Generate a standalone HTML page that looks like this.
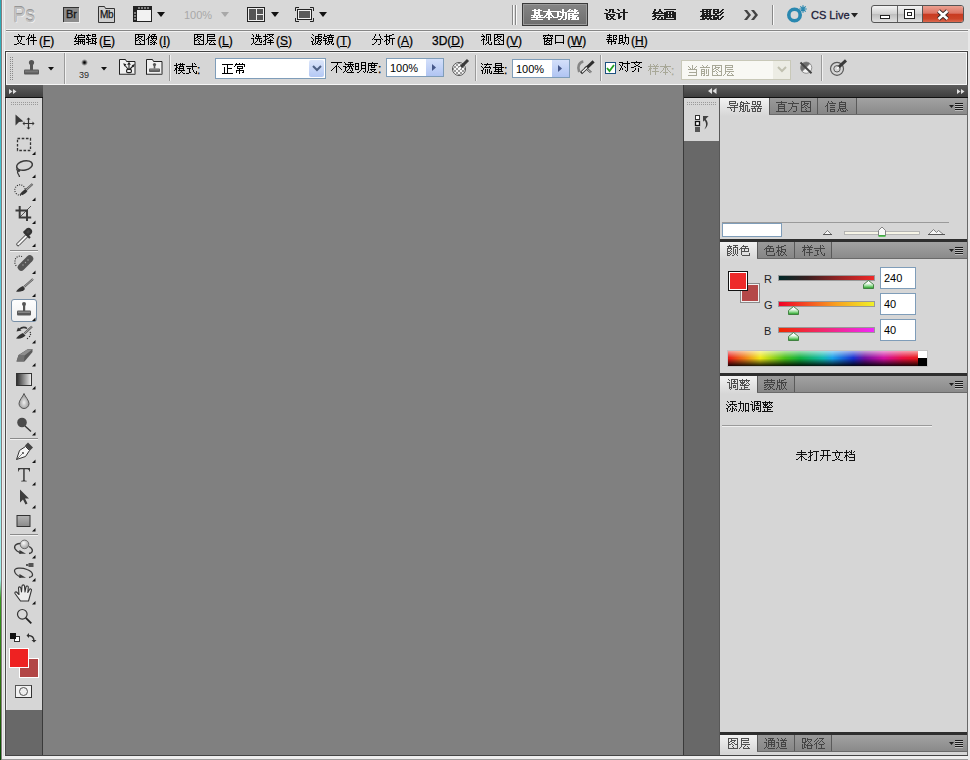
<!DOCTYPE html>
<html><head><meta charset="utf-8">
<style>
*{margin:0;padding:0;box-sizing:border-box}
html,body{width:970px;height:760px;overflow:hidden}
body{position:relative;background:#d9d9d9;font-family:"Liberation Sans",sans-serif;font-size:12px;color:#000}
.a{position:absolute}
.t{position:absolute;white-space:nowrap;line-height:14px}
u{text-decoration:none;border-bottom:1px solid currentColor;line-height:10px;display:inline-block}
</style></head><body>
<!-- desktop strip -->
<div class="a" style="left:0;top:0;width:1px;height:760px;background:linear-gradient(#2aa8b4 0,#40c4d0 150px,#60d0e0 300px,#a0f4f4 500px,#a0f0ec 580px,#3a9a20 598px,#2e8e18 620px,#2a6a0a 700px,#004800 760px)"></div>
<div class="a" style="left:1px;top:0;width:1px;height:760px;background:#8a8a8a"></div>
<div class="a" style="left:1px;top:0;width:1px;height:760px;background:#857c7c"></div><div class="a" style="left:2px;top:0;width:1px;height:760px;background:#eeeaee"></div><div class="a" style="left:3px;top:0;width:1px;height:760px;background:#dadcdc"></div><div class="a" style="left:4px;top:0;width:1px;height:760px;background:#eef0ee"></div>

<!-- app bar -->
<div class="a" style="left:5px;top:0;width:965px;height:29px;background:#d8d8d8"></div>

<!-- menu bar -->
<div class="a" style="left:5px;top:30px;width:965px;height:21px;background:#d8d8d8"></div>
<div class="a" style="left:6px;top:29px;width:964px;height:1px;background:#f2f2f2"></div><div class="a" style="left:6px;top:30px;width:964px;height:1px;background:#868686"></div><div class="a" style="left:6px;top:31px;width:964px;height:1px;background:#f2f2f2"></div>


<!-- APPBAR CONTENT -->
<div class="t" style="left:13px;top:3px;font-size:22px;line-height:24px;color:#c6c6c6;letter-spacing:0px;transform:scaleX(0.85);transform-origin:0 0;-webkit-text-stroke:0.3px #a8a8a8;text-shadow:0 -1px 0 #8e8e8e,1px 1px 0 #f2f2f2">Ps</div>
<div class="a" style="left:63px;top:7px;width:16px;height:15px;background:#8c8c8c;border-top:1px solid #333;border-left:1px solid #333;box-shadow:1px 1px 0 #eee"></div>
<div class="t" style="left:66px;top:8px;font-size:11px;line-height:13px;color:#151515;-webkit-text-stroke:0.3px #151515">Br</div>
<svg class="a" style="left:97px;top:5px" width="21" height="19"><path d="M1.5 17.5V1.5h6l1 2h9v14z" fill="#cfcfcf" stroke="#333" stroke-width="1"/><path d="M8.5 3.5" /></svg>
<div class="t" style="left:100px;top:8px;font-size:10px;line-height:13px;letter-spacing:-0.3px;color:#151515;-webkit-text-stroke:0.25px #151515">Mb</div>
<svg class="a" style="left:133px;top:6px" width="20" height="17"><rect x="0.5" y="0.5" width="18" height="15" fill="#d8d8d8" stroke="#222"/><rect x="1" y="1" width="17" height="3" fill="#222"/><rect x="1" y="1" width="3" height="14" fill="#222"/><path d="M6 1v2M9 1v2M12 1v2M15 1v2M1 7h2M1 10h2M1 13h2" stroke="#ddd"/><rect x="4" y="4" width="14" height="11" fill="#f2f2f2"/></svg>
<svg class="a" style="left:157px;top:12px" width="9" height="6"><path d="M0 0h8l-4 5z" fill="#111"/></svg>
<div class="t" style="left:184px;top:8px;font-size:11px;color:#a8a8a8">100%</div>
<svg class="a" style="left:221px;top:12px" width="9" height="6"><path d="M0 0h8l-4 5z" fill="#a8a8a8"/></svg>
<svg class="a" style="left:247px;top:7px" width="18" height="15"><rect x="0.5" y="0.5" width="17" height="14" fill="#eee" stroke="#222"/><rect x="2" y="2" width="7" height="11" fill="#555"/><rect x="10" y="2" width="6" height="5" fill="#555"/><rect x="10" y="8" width="6" height="5" fill="#555"/></svg>
<svg class="a" style="left:271px;top:12px" width="9" height="6"><path d="M0 0h8l-4 5z" fill="#111"/></svg>
<svg class="a" style="left:295px;top:7px" width="19" height="15"><path d="M0.5 4V0.5H4M15 0.5h3.5V4M18.5 11v3.5H15M4 14.5H0.5V11" stroke="#222" fill="none"/><rect x="2.5" y="2.5" width="14" height="10" fill="#eee" stroke="#222"/><rect x="4" y="4" width="11" height="7" fill="#5a5a5a"/></svg>
<svg class="a" style="left:319px;top:12px" width="9" height="6"><path d="M0 0h8l-4 5z" fill="#111"/></svg>
<div class="a" style="left:512px;top:5px;width:1px;height:20px;background:#888"></div>
<div class="a" style="left:513px;top:5px;width:1px;height:20px;background:#f8f8f8"></div>
<div class="a" style="left:515px;top:5px;width:1px;height:20px;background:#888"></div>
<div class="a" style="left:516px;top:5px;width:1px;height:20px;background:#f8f8f8"></div>
<div class="a" style="left:522px;top:3px;width:66px;height:23px;background:linear-gradient(#858585,#6e6e6e);border:1px solid #3a3a3a;box-shadow:inset 0 0 0 1px #9a9a9a"></div>
<svg class="a" style="left:744px;top:10px" width="15" height="10"><path d="M0 0h3l4 5l-4 5H0l4-5zM7 0h3l4 5l-4 5H7l4-5z" fill="#444"/></svg>
<div class="a" style="left:772px;top:5px;width:1px;height:20px;background:#888"></div>
<div class="a" style="left:773px;top:5px;width:1px;height:20px;background:#f8f8f8"></div>
<svg class="a" style="left:786px;top:4px" width="22" height="20"><circle cx="8.5" cy="11" r="5.7" fill="none" stroke="#2a88b0" stroke-width="3.6"/><path d="M17 1.2v7.6M13.2 5h7.6M14.3 2.3l5.4 5.4M19.7 2.3l-5.4 5.4" stroke="#2a88b0" stroke-width="1.2"/><circle cx="17" cy="5" r="1.3" fill="#2a88b0"/></svg>
<div class="t" style="left:811px;top:8px;font-size:11px;color:#202038;-webkit-text-stroke:0.3px #202038">CS Live</div>
<svg class="a" style="left:851px;top:13px" width="9" height="6"><path d="M0 0h7l-3.5 4.5z" fill="#222"/></svg>
<div class="a" style="left:871px;top:5px;width:93px;height:18px;border:1px solid #555;border-radius:3px;background:linear-gradient(#f4f4f4,#d0d0d0 50%,#bdbdbd 51%,#e0e0e0);overflow:hidden">
 <div class="a" style="left:25px;top:0;width:1px;height:16px;background:#666"></div>
 <div class="a" style="left:50px;top:0;width:41px;height:16px;background:linear-gradient(#eca090,#dc7464 45%,#c83a20 52%,#cc4428 80%,#dc6a50);border-left:1px solid #555"></div>
 <div class="a" style="left:8px;top:9px;width:10px;height:4px;background:#fff;border:1px solid #222"></div>
 <div class="a" style="left:32px;top:3px;width:11px;height:10px;background:#fff;border:1px solid #222;box-shadow:inset 0 0 0 2px #fff,inset 0 0 0 3px #222"></div>
 <svg class="a" style="left:63px;top:2px" width="16" height="13"><path d="M3.5 3l9 8M12.5 3l-9 8" stroke="#3a2a28" stroke-width="4.4"/><path d="M3.5 3l9 8M12.5 3l-9 8" stroke="#fff" stroke-width="2.6"/></svg>
</div>
<!-- MENU -->

<!-- options bar -->
<div class="a" style="left:4px;top:50px;width:965px;height:35px;background:#f4f4f4"></div>
<div class="a" style="left:5px;top:51px;width:963px;height:34px;background:#d6d6d6;border:1px solid #444;border-bottom:none"></div>
<div class="a" style="left:6px;top:52px;width:961px;height:33px;border:1px solid #f6f6f6"></div>


<!-- OPTIONS CONTENT -->
<svg class="a" style="left:10px;top:57px" width="4" height="24"><g fill="#8a8a8a"><rect x="0" y="0" width="1" height="1"/><rect x="2" y="0" width="1" height="1"/><rect x="0" y="2" width="1" height="1"/><rect x="2" y="2" width="1" height="1"/><rect x="0" y="4" width="1" height="1"/><rect x="2" y="4" width="1" height="1"/><rect x="0" y="6" width="1" height="1"/><rect x="2" y="6" width="1" height="1"/><rect x="0" y="8" width="1" height="1"/><rect x="2" y="8" width="1" height="1"/><rect x="0" y="10" width="1" height="1"/><rect x="2" y="10" width="1" height="1"/><rect x="0" y="12" width="1" height="1"/><rect x="2" y="12" width="1" height="1"/><rect x="0" y="14" width="1" height="1"/><rect x="2" y="14" width="1" height="1"/><rect x="0" y="16" width="1" height="1"/><rect x="2" y="16" width="1" height="1"/><rect x="0" y="18" width="1" height="1"/><rect x="2" y="18" width="1" height="1"/><rect x="0" y="20" width="1" height="1"/><rect x="2" y="20" width="1" height="1"/><rect x="0" y="22" width="1" height="1"/><rect x="2" y="22" width="1" height="1"/></g></svg>
<svg class="a" style="left:23px;top:59px" width="17" height="17"><circle cx="8.5" cy="3.5" r="2.6" fill="#555"/><rect x="7" y="4" width="3" height="7" fill="#555"/><rect x="1" y="10.5" width="15" height="5" rx="1" fill="#5a5a5a"/><rect x="2" y="11.5" width="13" height="2" fill="#777"/></svg>
<svg class="a" style="left:48px;top:67px" width="7" height="4"><path d="M0 0h6l-3 3.5z" fill="#111"/></svg>
<div class="a" style="left:64px;top:53px;width:1px;height:31px;background:#9a9a9a"></div>
<div class="a" style="left:65px;top:53px;width:1px;height:31px;background:#f0f0f0"></div>
<div class="a" style="left:81px;top:59px;width:7px;height:7px;border-radius:50%;background:radial-gradient(circle,#000 0,#222 20%,#999 50%,rgba(214,214,214,0) 70%)"></div>
<div class="t" style="left:79px;top:70px;font-size:9px;line-height:11px;color:#2a2a2a">39</div>
<svg class="a" style="left:101px;top:67px" width="7" height="4"><path d="M0 0h6l-3 3.5z" fill="#111"/></svg>
<svg class="a" style="left:118px;top:58px" width="19" height="18"><path d="M1.5 16.5V1.5h6l1 2h8.5v13z" fill="#f0f0f0" stroke="#222"/><path d="M2 16h15" stroke="#888"/><rect x="8.6" y="11.3" width="4.8" height="3.4" rx="1.2" fill="none" stroke="#222" stroke-width="1.2"/><path d="M10 11L7 7.5M11 11V6.5M12 11l3-3" stroke="#222" stroke-width="1.1"/><path d="M5.2 5.2l3.2 1-2 2.3zM11 3.8l1.9 3h-3.8zM16.8 6l-1 3.2-2.2-2z" fill="#222"/></svg>
<svg class="a" style="left:145px;top:58px" width="19" height="18"><path d="M1.5 16.5V1.5h6l1 2h8.5v13z" fill="#f0f0f0" stroke="#222"/><path d="M2 16h15" stroke="#888"/><circle cx="9.5" cy="6.5" r="1.6" fill="#555"/><rect x="8.7" y="7" width="1.6" height="3.5" fill="#555"/><rect x="4" y="10.5" width="11" height="3.5" rx="0.8" fill="#5a5a5a"/><rect x="5" y="11.3" width="9" height="1" fill="#8a8a8a"/></svg>
<div class="a" style="left:169px;top:55px;width:1px;height:26px;background:#9a9a9a"></div>
<div class="a" style="left:170px;top:55px;width:1px;height:26px;background:#f0f0f0"></div>
<div class="a" style="left:215px;top:58px;width:111px;height:21px;background:#fff;border:1px solid #7f9db9"></div>
<div class="a" style="left:309px;top:60px;width:15px;height:17px;background:linear-gradient(#dce6fa,#b4c8f4);border-radius:2px"></div>
<svg class="a" style="left:312px;top:65px" width="10" height="7"><path d="M1 1l4 4 4-4" stroke="#4d6185" stroke-width="2" fill="none"/></svg>
<div class="a" style="left:386px;top:58px;width:58px;height:19px;background:#fff;border:1px solid #7f9db9"></div>
<div class="a" style="left:426px;top:59px;width:17px;height:17px;background:linear-gradient(#d4e0fa,#b0c4f2)"></div>
<svg class="a" style="left:431px;top:64px" width="6" height="8"><path d="M1 0l4 3.5-4 3.5z" fill="#46588a"/></svg>
<div class="t" style="left:390px;top:61px;font-size:11px">100%</div>
<svg class="a" style="left:450px;top:58px" width="20" height="20"><defs><pattern id="ck" width="4" height="4" patternUnits="userSpaceOnUse"><rect width="4" height="4" fill="#f4f4f4"/><rect width="2" height="2" fill="#9a9a9a"/><rect x="2" y="2" width="2" height="2" fill="#9a9a9a"/></pattern></defs><circle cx="9" cy="11" r="6.5" fill="url(#ck)" stroke="#555" stroke-width="1"/><path d="M10.5 9.5l7.5-7.5" stroke="#3a3a3a" stroke-width="3"/><path d="M9.5 10.5l1.5-1.5" stroke="#fff" stroke-width="1.8"/></svg>
<div class="a" style="left:475px;top:55px;width:1px;height:26px;background:#9a9a9a"></div>
<div class="a" style="left:476px;top:55px;width:1px;height:26px;background:#f0f0f0"></div>
<div class="a" style="left:512px;top:59px;width:58px;height:19px;background:#fff;border:1px solid #7f9db9"></div>
<div class="a" style="left:552px;top:60px;width:17px;height:17px;background:linear-gradient(#d4e0fa,#b0c4f2)"></div>
<svg class="a" style="left:557px;top:65px" width="6" height="8"><path d="M1 0l4 3.5-4 3.5z" fill="#46588a"/></svg>
<div class="t" style="left:516px;top:62px;font-size:11px">100%</div>
<svg class="a" style="left:576px;top:59px" width="19" height="19"><path d="M7.3 2.6C3 3.5 1 8 3.2 13" stroke="#777" stroke-width="2.6" fill="none" opacity="0.85"/><path d="M9 8l6 5.5" stroke="#333" stroke-width="2.2"/><path d="M9 8l6 5.5" stroke="#f4f4f4" stroke-width="0.9"/><path d="M5 14.2L17.6 2.4" stroke="#2e2e2e" stroke-width="3"/><path d="M6 13.2L11 8.5" stroke="#f6f6f6" stroke-width="1.4"/></svg>
<div class="a" style="left:600px;top:55px;width:1px;height:26px;background:#9a9a9a"></div>
<div class="a" style="left:601px;top:55px;width:1px;height:26px;background:#f0f0f0"></div>
<div class="a" style="left:605px;top:62px;width:11px;height:12px;background:#fff;border:1px solid #1c5180"></div>
<svg class="a" style="left:606px;top:64px" width="9" height="9"><path d="M1 4l2.5 3 4.5-6" stroke="#21a121" stroke-width="1.8" fill="none"/></svg>
<div class="a" style="left:681px;top:60px;width:110px;height:20px;background:#f8f8f4;border:1px solid #c8c8b8"></div>
<div class="a" style="left:773px;top:61px;width:17px;height:18px;background:#ececE4"></div>
<svg class="a" style="left:777px;top:66px" width="10" height="7"><path d="M1 1l4 4 4-4" stroke="#c0c0b0" stroke-width="2" fill="none"/></svg>
<svg class="a" style="left:798px;top:60px" width="17" height="17"><defs><linearGradient id="ig" x1="0" y1="0" x2="1" y2="1"><stop offset="0.45" stop-color="#6e6e6e"/><stop offset="0.55" stop-color="#f2f2f2"/></linearGradient></defs><circle cx="8.2" cy="7.7" r="5.6" fill="url(#ig)" stroke="#7a7a7a" stroke-width="0.8"/><path d="M2.5 2.5L13.5 13.3" stroke="#444" stroke-width="2"/></svg>
<div class="a" style="left:821px;top:55px;width:1px;height:26px;background:#9a9a9a"></div>
<div class="a" style="left:822px;top:55px;width:1px;height:26px;background:#f0f0f0"></div>
<svg class="a" style="left:829px;top:58px" width="20" height="20"><circle cx="8" cy="10.8" r="6.5" fill="none" stroke="#5a5a5a" stroke-width="1.2"/><circle cx="8" cy="10.8" r="3.2" fill="none" stroke="#5a5a5a" stroke-width="1"/><path d="M9.5 9.3L17 2.3" stroke="#3a3a3a" stroke-width="3"/><path d="M8 10.8l1.8-1.8" stroke="#fff" stroke-width="1.3"/></svg>

<!-- toolbox -->
<div class="a" style="left:5px;top:85px;width:38px;height:671px;background:#686868;border-left:1px solid #4a4a4a;border-right:1px solid #3a3a3a"></div>
<div class="a" style="left:5px;top:85px;width:38px;height:12px;background:linear-gradient(#5c5c5c,#3e3e3e);border-left:1px solid #4a4a4a"></div>
<div class="a" style="left:5px;top:97px;width:38px;height:1px;background:#111"></div>
<div class="a" style="left:6px;top:98px;width:36px;height:612px;background:#d6d6d6;border-left:1px solid #ececec"></div>


<!-- TOOLS -->
<div class="a" style="left:11px;top:299px;width:26px;height:23px;border:1px solid #7890a8;border-radius:3px;background:linear-gradient(#fdfdfd,#f0f0f0)"></div>
<svg class="a" style="left:0;top:0" width="45" height="710">
<defs>
<linearGradient id="gg" x1="0" x2="1"><stop offset="0" stop-color="#2a2a2a"/><stop offset="1" stop-color="#f2f2f2"/></linearGradient>
<linearGradient id="rg" x1="0" x2="0" y1="0" y2="1"><stop offset="0" stop-color="#b4b4b4"/><stop offset="1" stop-color="#8a8a8a"/></linearGradient>
<radialGradient id="ball" cx="0.4" cy="0.35" r="0.7"><stop offset="0" stop-color="#fafafa"/><stop offset="1" stop-color="#999"/></radialGradient>
<radialGradient id="drop" cx="0.5" cy="0.6" r="0.6"><stop offset="0" stop-color="#eee"/><stop offset="1" stop-color="#888"/></radialGradient>
</defs>
<g fill="#9a9a9a"><rect x="11" y="102" width="1" height="1"/><rect x="11" y="104" width="1" height="1"/><rect x="13" y="102" width="1" height="1"/><rect x="13" y="104" width="1" height="1"/><rect x="15" y="102" width="1" height="1"/><rect x="15" y="104" width="1" height="1"/><rect x="17" y="102" width="1" height="1"/><rect x="17" y="104" width="1" height="1"/><rect x="19" y="102" width="1" height="1"/><rect x="19" y="104" width="1" height="1"/><rect x="21" y="102" width="1" height="1"/><rect x="21" y="104" width="1" height="1"/><rect x="23" y="102" width="1" height="1"/><rect x="23" y="104" width="1" height="1"/><rect x="25" y="102" width="1" height="1"/><rect x="25" y="104" width="1" height="1"/><rect x="27" y="102" width="1" height="1"/><rect x="27" y="104" width="1" height="1"/><rect x="29" y="102" width="1" height="1"/><rect x="29" y="104" width="1" height="1"/><rect x="31" y="102" width="1" height="1"/><rect x="31" y="104" width="1" height="1"/><rect x="33" y="102" width="1" height="1"/><rect x="33" y="104" width="1" height="1"/><rect x="35" y="102" width="1" height="1"/><rect x="35" y="104" width="1" height="1"/><rect x="37" y="102" width="1" height="1"/><rect x="37" y="104" width="1" height="1"/></g>
<path d="M32 155.0h3.5v-3.5z" fill="#111"/><path d="M32 178.0h3.5v-3.5z" fill="#111"/><path d="M32 201.0h3.5v-3.5z" fill="#111"/><path d="M32 224.0h3.5v-3.5z" fill="#111"/><path d="M32 247.0h3.5v-3.5z" fill="#111"/><path d="M32 274.0h3.5v-3.5z" fill="#111"/><path d="M32 297.0h3.5v-3.5z" fill="#111"/><path d="M32 321.0h3.5v-3.5z" fill="#111"/><path d="M32 343.5h3.5v-3.5z" fill="#111"/><path d="M32 366.5h3.5v-3.5z" fill="#111"/><path d="M32 389.5h3.5v-3.5z" fill="#111"/><path d="M32 412.5h3.5v-3.5z" fill="#111"/><path d="M32 435.5h3.5v-3.5z" fill="#111"/><path d="M32 463.0h3.5v-3.5z" fill="#111"/><path d="M32 485.5h3.5v-3.5z" fill="#111"/><path d="M32 508.5h3.5v-3.5z" fill="#111"/><path d="M32 531.5h3.5v-3.5z" fill="#111"/><path d="M32 558.5h3.5v-3.5z" fill="#111"/><path d="M32 581.5h3.5v-3.5z" fill="#111"/><path d="M32 604.5h3.5v-3.5z" fill="#111"/>
<rect x="10" y="250" width="28" height="1" fill="#8a8a8a"/><rect x="10" y="251" width="28" height="1" fill="#f2f2f2"/>
<rect x="10" y="438" width="28" height="1" fill="#8a8a8a"/><rect x="10" y="439" width="28" height="1" fill="#f2f2f2"/>
<rect x="10" y="534" width="28" height="1" fill="#8a8a8a"/><rect x="10" y="535" width="28" height="1" fill="#f2f2f2"/>
<!-- move -->
<path d="M15.5 114.5L23.5 121.5L19 122L15.5 125.5z" fill="#3a3a3a"/>
<path d="M24 123.5h9M28.5 119v9" stroke="#333" stroke-width="1.2"/>
<path d="M28.5 117.5l-2 2h4zM28.5 129.5l-2-2h4zM22.5 123.5l2-2v4zM34.5 123.5l-2-2v4z" fill="#333"/>
<!-- marquee -->
<rect x="17.5" y="138.5" width="13" height="12" fill="none" stroke="#333" stroke-width="1.3" stroke-dasharray="2.6 1.6"/>
<!-- lasso -->
<ellipse cx="24.5" cy="165.5" rx="8" ry="4.6" transform="rotate(-12 24.5 165.5)" fill="none" stroke="#3a3a3a" stroke-width="1.5"/>
<path d="M17.5 168c-2 2 1 4 2 3s-2-1-2 1 2 3 2 5" fill="none" stroke="#3a3a3a" stroke-width="1.3"/>
<!-- quick select -->
<circle cx="20" cy="190" r="5.2" fill="none" stroke="#222" stroke-width="1.1" stroke-dasharray="1 1.3"/>
<path d="M19.5 195c3 0 6-1 8-4l-2-2c-3 2-5 4-6 6z" fill="#333"/>
<path d="M26.5 189.5l6-5.5" stroke="#555" stroke-width="2.2"/><path d="M26.5 189.5l6-5.5" stroke="#ccc" stroke-width="0.7"/>
<!-- crop -->
<path d="M19.7 206v11.5h11.5M15.5 210.5h11.5v10.5" fill="none" stroke="#3a3a3a" stroke-width="2"/>
<path d="M20 217L31 206" stroke="#333" stroke-width="0.8"/>
<!-- eyedropper -->
<path d="M17 243.5l9-9 2 2-9 9c-1 1-3 0-2-2z" fill="#f4f4f4" stroke="#333" stroke-width="1"/>
<path d="M24 232l6 6M27 229.5a2.5 2.5 0 0 1 3.5 3.5l-2.5 2.5-3.5-3.5z" stroke="#333" stroke-width="2.2" fill="#444"/>
<!-- healing -->
<path d="M22 256.5a5 5 0 0 0-7 5a5 5 0 0 0 2 5" fill="none" stroke="#222" stroke-width="1.1" stroke-dasharray="1 1.3"/>
<rect x="16" y="259.5" width="19" height="7" rx="3.5" transform="rotate(-45 25.5 263)" fill="#555"/>
<g fill="#aaa"><circle cx="23" cy="265" r="0.7"/><circle cx="25.5" cy="262.5" r="0.7"/><circle cx="28" cy="260" r="0.7"/></g>
<!-- brush -->
<path d="M16 291.5c4 0.5 7 0 9-2.5l-2-3c-3 1-5 3-7 5.5z" fill="#333"/>
<path d="M24 287l9-8" stroke="#555" stroke-width="2.2"/><path d="M24 287l9-8" stroke="#ccc" stroke-width="0.7"/>
<!-- stamp -->
<circle cx="24" cy="304" r="2" fill="#555"/>
<rect x="23" y="305" width="2.2" height="6" fill="#555"/>
<rect x="17" y="310.5" width="14" height="5" rx="1" fill="#5a5a5a"/><rect x="18" y="311.5" width="12" height="1.5" fill="#888"/>
<!-- history brush -->
<path d="M27 328.5c-2-1.5-5-1.5-8 1" fill="none" stroke="#333" stroke-width="1.5"/><path d="M16.5 331.5l1.5-4 3.5 3z" fill="#333"/>
<path d="M16 338.5c4 0.5 7.5-0.5 9.5-3l-2.5-2.5c-3 1-5 3-7 5.5z" fill="#333"/>
<path d="M24.5 333.5l7.5-7" stroke="#555" stroke-width="2.2"/><path d="M24.5 333.5l7.5-7" stroke="#ccc" stroke-width="0.7"/>
<g fill="#333"><circle cx="30.3" cy="332.5" r="0.7"/><circle cx="30.5" cy="334.5" r="0.7"/><circle cx="29.5" cy="336.5" r="0.7"/><circle cx="27.5" cy="338.5" r="0.7"/></g>
<!-- eraser -->
<path d="M16.5 361.5L18.5 355L28 349h4.5v3l-8 9.5z" fill="#5a5a5a"/>
<path d="M18.5 355.5L27.5 349.2h5L24.5 355.5z" fill="#8e8e8e"/>
<path d="M16.5 361.5L18.5 355.5h6l-0.5 6z" fill="#727272"/>
<!-- gradient -->
<rect x="16.5" y="373.5" width="15" height="12" fill="url(#gg)" stroke="#333"/>
<!-- blur -->
<path d="M24 393.5c-1 3-5 7-5 10a5 5 0 0 0 10 0c0-3-4-7-5-10z" fill="url(#drop)" stroke="#555" stroke-width="1"/>
<!-- dodge -->
<circle cx="22" cy="422.5" r="4.8" fill="#4a4a4a"/>
<path d="M25 426l6 5.5" stroke="#333" stroke-width="1.3"/>
<!-- pen -->
<path d="M16.5 459.5l3-9 6-4 4 4-4 6z" fill="#f6f6f6" stroke="#333" stroke-width="1"/>
<path d="M25 445.5l3-3 5 5-3 3z" fill="#444"/><circle cx="23" cy="453" r="0.9" fill="#333"/><path d="M16.5 459.5l6-6" stroke="#333" stroke-width="0.6"/>
<!-- type -->
<path d="M18 468h12v3.5h-0.8c0-2-1-2.3-3-2.3h-1.5v10.5c0 0.8 0.5 1 2 1v0.8h-5.5v-0.8c1.5 0 2-0.2 2-1v-10.5h-1.5c-2 0-3 0.3-3 2.3h-0.7z" fill="#3a3a3a"/>
<!-- path select -->
<path d="M20 489.5v13l3-3 2.5 5 2-1-2.5-5h4z" fill="#3c3c3c"/>
<!-- rect -->
<rect x="17" y="515.5" width="13" height="11" fill="url(#rg)" stroke="#333" stroke-width="1"/>
<!-- 3d rotate -->
<path d="M20 543.5C14 544 13 548 17 551L21 553.2M29 553.5C33 553 34 549 29 546.5" fill="none" stroke="#3a3a3a" stroke-width="1.3"/>
<path d="M19.5 550L26 553.8H19z" fill="#3a3a3a"/>
<circle cx="24.5" cy="544.4" r="4.3" fill="url(#ball)" stroke="#555" stroke-width="0.8"/>
<!-- 3d orbit -->
<path d="M29 577.5C34 577 34 572 27 569.5C22 567.5 14 567.5 14.5 571C15 574 18 576 21 577.3" fill="none" stroke="#3a3a3a" stroke-width="1.3"/>
<path d="M19.5 574L26 577.8H19z" fill="#3a3a3a"/>
<rect x="28.5" y="563" width="5" height="4" fill="#555"/><rect x="26" y="564" width="2.5" height="2" fill="#555"/>
<!-- hand -->
<path d="M20.5 601L15 593.5C14.5 592.5 15.5 591.5 16.5 592L19 594.5L18.5 588C18.5 586.5 20.5 586.5 20.8 588L21.5 592L22 586C22.2 584.5 24.3 584.5 24.5 586L25 592L26 587C26.3 585.5 28.3 585.8 28.3 587.2L27.8 592.5L29.5 589.5C30 588.5 31.8 588.8 31.5 590.2L28.5 601z" fill="#ececec" stroke="#333" stroke-width="1.1" stroke-linejoin="round"/>
<!-- zoom -->
<circle cx="22.3" cy="614.3" r="4.8" fill="#d8d8d8" stroke="#333" stroke-width="1.2"/>
<path d="M25.8 617.8l5.5 5.5" stroke="#222" stroke-width="1.8"/>
<!-- default colors -->
<rect x="14.5" y="636.5" width="5" height="5" fill="#fff" stroke="#333" stroke-width="1"/>
<rect x="10" y="633" width="6" height="6" fill="#111"/>
<path d="M28 635.5c4 0 6 2 6 5.5" fill="none" stroke="#333" stroke-width="1.3"/>
<path d="M26.5 635.5l2.5-2.5v5z M34 642.5l-2.5-2.5h5z" fill="#333"/>
<!-- fg/bg -->
<rect x="19" y="658" width="20" height="20" fill="#fff"/>
<rect x="20" y="659" width="18" height="18" fill="#b24646"/>
<rect x="9" y="648" width="20" height="20" fill="#fff"/>
<rect x="10" y="649" width="18" height="18" fill="#ee2222"/>
<!-- quick mask -->
<rect x="15.5" y="685.5" width="16" height="12" fill="#f2f2f2" stroke="#555" stroke-width="1"/>
<path d="M15.5 697.5h16v-12" fill="none" stroke="#333" stroke-width="1"/>
<circle cx="23.5" cy="691.5" r="4" fill="#eee" stroke="#555" stroke-width="1"/>
</svg>

<!-- canvas -->
<div class="a" style="left:43px;top:85px;width:640px;height:670px;background:#808080"></div>

<!-- right dock -->
<div class="a" style="left:683px;top:85px;width:285px;height:670px;background:#686868;border-left:1px solid #3a3a3a"></div>
<div class="a" style="left:684px;top:85px;width:284px;height:12px;background:linear-gradient(#5c5c5c,#3e3e3e)"></div>
<div class="a" style="left:684px;top:97px;width:284px;height:1px;background:#111"></div>
<div class="a" style="left:684px;top:98px;width:35px;height:43px;background:#d6d6d6"></div>
<div class="a" style="left:719px;top:98px;width:1px;height:657px;background:#585858"></div><div class="a" style="left:720px;top:98px;width:1px;height:657px;background:#e2e2e2"></div><div class="a" style="left:966px;top:98px;width:1px;height:657px;background:#e0e0e0"></div>

<!-- panels -->
<div class="a" style="left:720px;top:98px;width:247px;height:141px;background:#d6d6d6"></div>
<div class="a" style="left:720px;top:239px;width:247px;height:3px;background:#2e2e2e"></div>
<div class="a" style="left:720px;top:242px;width:247px;height:131px;background:#d6d6d6"></div>
<div class="a" style="left:720px;top:373px;width:247px;height:3px;background:#2e2e2e"></div>
<div class="a" style="left:720px;top:376px;width:247px;height:356px;background:#d6d6d6"></div>
<div class="a" style="left:720px;top:732px;width:247px;height:3px;background:#2e2e2e"></div>
<div class="a" style="left:720px;top:735px;width:247px;height:20px;background:#d6d6d6"></div>


<!-- PANEL CONTENT -->
<svg class="a" style="left:9px;top:89px" width="8" height="6"><path d="M0 0l3.5 2.5L0 5zM4 0l3.5 2.5L4 5z" fill="#e0e0e0"/></svg>
<svg class="a" style="left:708px;top:88px" width="9" height="6"><path d="M4 0L0 3l4 3zM8.5 0L4.5 3l4 3z" fill="#e0e0e0"/></svg>
<svg class="a" style="left:957px;top:89px" width="8" height="6"><path d="M0 0l3.5 2.5L0 5zM4 0l3.5 2.5L4 5z" fill="#e0e0e0"/></svg>
<svg class="a" style="left:687px;top:102px" width="30" height="3"><g fill="#9a9a9a"><rect x="0" y="0" width="1" height="1"/><rect x="0" y="2" width="1" height="1"/><rect x="2" y="0" width="1" height="1"/><rect x="2" y="2" width="1" height="1"/><rect x="4" y="0" width="1" height="1"/><rect x="4" y="2" width="1" height="1"/><rect x="6" y="0" width="1" height="1"/><rect x="6" y="2" width="1" height="1"/><rect x="8" y="0" width="1" height="1"/><rect x="8" y="2" width="1" height="1"/><rect x="10" y="0" width="1" height="1"/><rect x="10" y="2" width="1" height="1"/><rect x="12" y="0" width="1" height="1"/><rect x="12" y="2" width="1" height="1"/><rect x="14" y="0" width="1" height="1"/><rect x="14" y="2" width="1" height="1"/><rect x="16" y="0" width="1" height="1"/><rect x="16" y="2" width="1" height="1"/><rect x="18" y="0" width="1" height="1"/><rect x="18" y="2" width="1" height="1"/><rect x="20" y="0" width="1" height="1"/><rect x="20" y="2" width="1" height="1"/><rect x="22" y="0" width="1" height="1"/><rect x="22" y="2" width="1" height="1"/><rect x="24" y="0" width="1" height="1"/><rect x="24" y="2" width="1" height="1"/><rect x="26" y="0" width="1" height="1"/><rect x="26" y="2" width="1" height="1"/><rect x="28" y="0" width="1" height="1"/><rect x="28" y="2" width="1" height="1"/></g></svg>
<svg class="a" style="left:694px;top:114px" width="17" height="19"><rect x="1.5" y="1.5" width="4" height="4" fill="#fff" stroke="#333"/><rect x="1.5" y="7.5" width="4" height="4" fill="#fff" stroke="#111" stroke-width="1.3"/><rect x="1" y="13" width="5" height="5" fill="#555"/><path d="M9 2.1h5.7L9 7.8z" fill="#444"/><path d="M11 4.5C14.5 7.5 15 12 10.2 15.6C13 12 12.5 8 10 6z" fill="#3a3a3a"/></svg>
<div class="a" style="left:720px;top:98px;width:247px;height:17px;background:linear-gradient(#a2a2a2,#8a8a8a);border-bottom:1px solid #6a6a6a"></div>
<div class="a" style="left:720px;top:98px;width:49px;height:18px;background:linear-gradient(#f2f2f2,#d6d6d6)"></div>
<div class="a" style="left:769px;top:98px;width:49px;height:16px;background:linear-gradient(#9a9a9a,#868686);border-right:1px solid #5a5a5a;border-left:1px solid #5a5a5a"></div>
<div class="a" style="left:818px;top:98px;width:39px;height:16px;background:linear-gradient(#9a9a9a,#868686);border-right:1px solid #5a5a5a;border-left:none"></div>
<svg class="a" style="left:949px;top:98px" width="15" height="13"><path d="M0 7h5l-2.5 3z" fill="#222"/><g fill="#1a1a1a"><rect x="6" y="5" width="8" height="1"/><rect x="6" y="7" width="8" height="1"/><rect x="6" y="9" width="8" height="1"/><rect x="6" y="11" width="8" height="1"/></g><g fill="#bdbdbd"><rect x="6" y="6" width="8" height="1"/><rect x="6" y="8" width="8" height="1"/><rect x="6" y="10" width="8" height="1"/><rect x="6" y="12" width="8" height="1"/></g></svg>

<div class="a" style="left:722px;top:222px;width:227px;height:1px;background:#9a9a9a"></div>
<div class="a" style="left:722px;top:223px;width:60px;height:14px;background:#fff;border:1px solid #7f9db9"></div>
<svg class="a" style="left:822px;top:226px" width="128" height="12"><path d="M1.5 8.5l4-4 4 4z" fill="#f4f4f4" stroke="#666" stroke-width="0.8"/><path d="M1 8.5h9" stroke="#555"/><rect x="22.5" y="5.5" width="75" height="3" fill="#f6f4e6" stroke="#aaa" stroke-width="0.8"/><path d="M56.5 9.5v-5l3.5-3.5 3.5 3.5v5z" fill="#f8f8f8" stroke="#777" stroke-width="0.9"/><path d="M56.5 10h7" stroke="#2cb82c" stroke-width="1.4"/><path d="M106.5 8.5l5-5 3 3 2-2 5 4z" fill="#f4f4f4" stroke="#666" stroke-width="0.8"/><path d="M106 8.5h17" stroke="#555"/></svg>
<div class="a" style="left:720px;top:242px;width:247px;height:17px;background:linear-gradient(#a2a2a2,#8a8a8a);border-bottom:1px solid #6a6a6a"></div>
<div class="a" style="left:720px;top:242px;width:37px;height:18px;background:linear-gradient(#f2f2f2,#d6d6d6)"></div>
<div class="a" style="left:757px;top:242px;width:38px;height:16px;background:linear-gradient(#9a9a9a,#868686);border-right:1px solid #5a5a5a;border-left:1px solid #5a5a5a"></div>
<div class="a" style="left:795px;top:242px;width:37px;height:16px;background:linear-gradient(#9a9a9a,#868686);border-right:1px solid #5a5a5a;border-left:none"></div>
<svg class="a" style="left:949px;top:242px" width="15" height="13"><path d="M0 7h5l-2.5 3z" fill="#222"/><g fill="#1a1a1a"><rect x="6" y="5" width="8" height="1"/><rect x="6" y="7" width="8" height="1"/><rect x="6" y="9" width="8" height="1"/><rect x="6" y="11" width="8" height="1"/></g><g fill="#bdbdbd"><rect x="6" y="6" width="8" height="1"/><rect x="6" y="8" width="8" height="1"/><rect x="6" y="10" width="8" height="1"/><rect x="6" y="12" width="8" height="1"/></g></svg>

<div class="a" style="left:728px;top:271px;width:20px;height:20px;background:#ee2a2a;border:1px solid #111;box-shadow:inset 0 0 0 1px #fff"></div>
<div class="a" style="left:740px;top:283px;width:20px;height:20px;background:#b44848;border:1px solid #8a8a8a;box-shadow:inset 0 0 0 1px #f0f0f0"></div>
<div class="a" style="left:728px;top:271px;width:20px;height:20px;background:#ee2a2a;border:1px solid #111;box-shadow:inset 0 0 0 1px #fff"></div>
<div class="t" style="left:764px;top:272px;font-size:11px;color:#222">R</div>
<div class="t" style="left:764px;top:298px;font-size:11px;color:#222">G</div>
<div class="t" style="left:764px;top:324px;font-size:11px;color:#222">B</div>
<div class="a" style="left:778px;top:275px;width:97px;height:6px;background:linear-gradient(90deg,#002828,#3a2020 30%,#9a2424 65%,#f02828);border:1px solid #999"></div>
<div class="a" style="left:778px;top:301px;width:97px;height:6px;background:linear-gradient(90deg,#f00028,#f8a020 60%,#f0f028);border:1px solid #999"></div>
<div class="a" style="left:778px;top:327px;width:97px;height:6px;background:linear-gradient(90deg,#f02800,#f02878 50%,#f028f8);border:1px solid #999"></div>
<svg class="a" style="left:863px;top:280px" width="11" height="9"><defs><linearGradient id="tg1" x1="0" x2="0" y1="0" y2="1"><stop offset="0.35" stop-color="#fafafa"/><stop offset="0.65" stop-color="#9be09b"/><stop offset="1" stop-color="#1a9a1a"/></linearGradient></defs><path d="M0.5 8.5V4.5l5-4 5 4v4z" fill="url(#tg1)" stroke="#3a7a3a" stroke-width="0.9"/></svg>
<svg class="a" style="left:788px;top:306px" width="11" height="9"><defs><linearGradient id="tg2" x1="0" x2="0" y1="0" y2="1"><stop offset="0.35" stop-color="#fafafa"/><stop offset="0.65" stop-color="#9be09b"/><stop offset="1" stop-color="#1a9a1a"/></linearGradient></defs><path d="M0.5 8.5V4.5l5-4 5 4v4z" fill="url(#tg2)" stroke="#3a7a3a" stroke-width="0.9"/></svg>
<svg class="a" style="left:788px;top:332px" width="11" height="9"><defs><linearGradient id="tg3" x1="0" x2="0" y1="0" y2="1"><stop offset="0.35" stop-color="#fafafa"/><stop offset="0.65" stop-color="#9be09b"/><stop offset="1" stop-color="#1a9a1a"/></linearGradient></defs><path d="M0.5 8.5V4.5l5-4 5 4v4z" fill="url(#tg3)" stroke="#3a7a3a" stroke-width="0.9"/></svg>
<div class="a" style="left:880px;top:267px;width:36px;height:22px;background:#fff;border:1px solid #7f9db9"></div>
<div class="a" style="left:880px;top:293px;width:36px;height:22px;background:#fff;border:1px solid #7f9db9"></div>
<div class="a" style="left:880px;top:319px;width:36px;height:22px;background:#fff;border:1px solid #7f9db9"></div>
<div class="t" style="left:884px;top:271px;font-size:11px">240</div>
<div class="t" style="left:884px;top:297px;font-size:11px">40</div>
<div class="t" style="left:884px;top:323px;font-size:11px">40</div>
<div class="a" style="left:727px;top:350px;width:201px;height:17px;background:#c4c4c4"></div>
<div class="a" style="left:728px;top:351px;width:190px;height:15px;background:linear-gradient(90deg,#e81818 0%,#f08018 9%,#f0e818 17%,#48c018 30%,#10b040 38%,#10b8b0 50%,#18a0e8 55%,#1830d0 66%,#7010a0 72%,#d010a0 82%,#e81040 92%,#e81818 100%)"></div>
<div class="a" style="left:728px;top:351px;width:190px;height:15px;background:linear-gradient(rgba(255,255,255,0.6),rgba(255,255,255,0) 45%,rgba(0,0,0,0) 50%,rgba(0,0,0,0.9))"></div>
<div class="a" style="left:918px;top:351px;width:9px;height:7px;background:#fff"></div>
<div class="a" style="left:918px;top:358px;width:9px;height:8px;background:#000"></div>
<div class="a" style="left:720px;top:376px;width:247px;height:17px;background:linear-gradient(#a2a2a2,#8a8a8a);border-bottom:1px solid #6a6a6a"></div>
<div class="a" style="left:720px;top:376px;width:37px;height:18px;background:linear-gradient(#f2f2f2,#d6d6d6)"></div>
<div class="a" style="left:757px;top:376px;width:38px;height:16px;background:linear-gradient(#9a9a9a,#868686);border-right:1px solid #5a5a5a;border-left:1px solid #5a5a5a"></div>
<svg class="a" style="left:949px;top:376px" width="15" height="13"><path d="M0 7h5l-2.5 3z" fill="#222"/><g fill="#1a1a1a"><rect x="6" y="5" width="8" height="1"/><rect x="6" y="7" width="8" height="1"/><rect x="6" y="9" width="8" height="1"/><rect x="6" y="11" width="8" height="1"/></g><g fill="#bdbdbd"><rect x="6" y="6" width="8" height="1"/><rect x="6" y="8" width="8" height="1"/><rect x="6" y="10" width="8" height="1"/><rect x="6" y="12" width="8" height="1"/></g></svg>

<div class="a" style="left:722px;top:425px;width:210px;height:1px;background:#9a9a9a"></div>
<div class="a" style="left:722px;top:426px;width:210px;height:1px;background:#f0f0f0"></div>
<div class="a" style="left:720px;top:735px;width:247px;height:17px;background:linear-gradient(#a2a2a2,#8a8a8a);border-bottom:1px solid #6a6a6a"></div>
<div class="a" style="left:720px;top:735px;width:37px;height:18px;background:linear-gradient(#f2f2f2,#d6d6d6)"></div>
<div class="a" style="left:757px;top:735px;width:38px;height:16px;background:linear-gradient(#9a9a9a,#868686);border-right:1px solid #5a5a5a;border-left:1px solid #5a5a5a"></div>
<div class="a" style="left:795px;top:735px;width:37px;height:16px;background:linear-gradient(#9a9a9a,#868686);border-right:1px solid #5a5a5a;border-left:none"></div>
<svg class="a" style="left:949px;top:735px" width="15" height="13"><path d="M0 7h5l-2.5 3z" fill="#222"/><g fill="#1a1a1a"><rect x="6" y="5" width="8" height="1"/><rect x="6" y="7" width="8" height="1"/><rect x="6" y="9" width="8" height="1"/><rect x="6" y="11" width="8" height="1"/></g><g fill="#bdbdbd"><rect x="6" y="6" width="8" height="1"/><rect x="6" y="8" width="8" height="1"/><rect x="6" y="10" width="8" height="1"/><rect x="6" y="12" width="8" height="1"/></g></svg>


<!-- bottom border -->
<div class="a" style="left:5px;top:755px;width:965px;height:1px;background:#444"></div>
<div class="a" style="left:2px;top:756px;width:968px;height:3px;background:#eeeeee"></div><div class="a" style="left:2px;top:759px;width:968px;height:1px;background:#9a9a9a"></div>
<div class="a" style="left:968px;top:30px;width:2px;height:730px;background:#e8e8e8"></div>
<svg class="a" style="left:0;top:0" width="970" height="760"><defs><path id="g0" d="M3 2h1v1h-1zM7 2h1v1h-1zM1 3h9v1h-9zM3 4h1v1h-1zM7 4h1v1h-1zM3 5h3v1h-3zM7 5h1v1h-1zM3 6h1v1h-1zM5 6h3v1h-3zM3 7h1v1h-1zM7 7h1v1h-1zM0 8h11v1h-11zM2 9h1v1h-1zM5 9h1v1h-1zM8 9h1v1h-1zM0 10h2v1h-2zM3 10h5v1h-5zM9 10h2v1h-2zM5 11h1v1h-1zM0 12h11v1h-11z"/><path id="g1" d="M5 2h1v1h-1zM5 3h1v1h-1zM0 4h11v1h-11zM4 5h3v1h-3zM3 6h1v1h-1zM5 6h1v1h-1zM7 6h1v1h-1zM3 7h1v1h-1zM5 7h1v1h-1zM7 7h1v1h-1zM2 8h1v1h-1zM5 8h1v1h-1zM8 8h1v1h-1zM1 9h1v1h-1zM5 9h1v1h-1zM9 9h1v1h-1zM0 10h1v1h-1zM3 10h5v1h-5zM10 10h1v1h-1zM5 11h1v1h-1zM5 12h1v1h-1z"/><path id="g2" d="M7 2h1v1h-1zM7 3h1v1h-1zM0 4h5v1h-5zM7 4h1v1h-1zM2 5h1v1h-1zM5 5h6v1h-6zM2 6h1v1h-1zM7 6h1v1h-1zM10 6h1v1h-1zM2 7h1v1h-1zM7 7h1v1h-1zM10 7h1v1h-1zM2 8h1v1h-1zM7 8h1v1h-1zM10 8h1v1h-1zM2 9h3v1h-3zM6 9h1v1h-1zM10 9h1v1h-1zM0 10h2v1h-2zM6 10h1v1h-1zM10 10h1v1h-1zM5 11h1v1h-1zM10 11h1v1h-1zM3 12h2v1h-2zM8 12h2v1h-2z"/><path id="g3" d="M2 2h1v1h-1zM7 2h1v1h-1zM1 3h1v1h-1zM4 3h1v1h-1zM7 3h1v1h-1zM9 3h1v1h-1zM0 4h6v1h-6zM7 4h2v1h-2zM7 5h1v1h-1zM10 5h1v1h-1zM1 6h5v1h-5zM7 6h4v1h-4zM1 7h1v1h-1zM5 7h1v1h-1zM1 8h5v1h-5zM7 8h1v1h-1zM9 8h1v1h-1zM1 9h1v1h-1zM5 9h1v1h-1zM7 9h2v1h-2zM1 10h5v1h-5zM7 10h1v1h-1zM10 10h1v1h-1zM1 11h1v1h-1zM5 11h1v1h-1zM7 11h1v1h-1zM10 11h1v1h-1zM1 12h1v1h-1zM4 12h2v1h-2zM7 12h4v1h-4z"/><path id="g4" d="M1 2h1v1h-1zM5 2h4v1h-4zM2 3h1v1h-1zM5 3h1v1h-1zM8 3h1v1h-1zM5 4h1v1h-1zM8 4h1v1h-1zM4 5h1v1h-1zM8 5h3v1h-3zM0 6h3v1h-3zM2 7h1v1h-1zM4 7h6v1h-6zM2 8h1v1h-1zM5 8h1v1h-1zM9 8h1v1h-1zM2 9h1v1h-1zM6 9h1v1h-1zM8 9h1v1h-1zM2 10h2v1h-2zM7 10h1v1h-1zM2 11h1v1h-1zM6 11h1v1h-1zM8 11h1v1h-1zM3 12h3v1h-3zM9 12h2v1h-2z"/><path id="g5" d="M1 2h1v1h-1zM7 2h1v1h-1zM2 3h1v1h-1zM7 3h1v1h-1zM7 4h1v1h-1zM4 5h7v1h-7zM0 6h3v1h-3zM7 6h1v1h-1zM2 7h1v1h-1zM7 7h1v1h-1zM2 8h1v1h-1zM7 8h1v1h-1zM2 9h1v1h-1zM4 9h1v1h-1zM7 9h1v1h-1zM2 10h2v1h-2zM7 10h1v1h-1zM2 11h1v1h-1zM7 11h1v1h-1zM7 12h1v1h-1z"/><path id="g6" d="M2 2h1v1h-1zM7 2h1v1h-1zM2 3h1v1h-1zM7 3h1v1h-1zM1 4h1v1h-1zM6 4h1v1h-1zM8 4h1v1h-1zM1 5h1v1h-1zM3 5h1v1h-1zM5 5h1v1h-1zM9 5h1v1h-1zM0 6h3v1h-3zM4 6h1v1h-1zM6 6h3v1h-3zM10 6h1v1h-1zM2 7h1v1h-1zM1 8h1v1h-1zM3 8h1v1h-1zM5 8h6v1h-6zM0 9h3v1h-3zM7 9h1v1h-1zM3 10h1v1h-1zM6 10h1v1h-1zM9 10h1v1h-1zM2 11h1v1h-1zM5 11h1v1h-1zM9 11h1v1h-1zM0 12h2v1h-2zM5 12h4v1h-4zM10 12h1v1h-1z"/><path id="g7" d="M0 2h11v1h-11zM2 4h7v1h-7zM0 5h1v1h-1zM2 5h1v1h-1zM5 5h1v1h-1zM8 5h1v1h-1zM10 5h1v1h-1zM0 6h1v1h-1zM2 6h1v1h-1zM5 6h1v1h-1zM8 6h1v1h-1zM10 6h1v1h-1zM0 7h1v1h-1zM2 7h7v1h-7zM10 7h1v1h-1zM0 8h1v1h-1zM2 8h1v1h-1zM5 8h1v1h-1zM8 8h1v1h-1zM10 8h1v1h-1zM0 9h1v1h-1zM2 9h1v1h-1zM5 9h1v1h-1zM8 9h1v1h-1zM10 9h1v1h-1zM0 10h1v1h-1zM2 10h7v1h-7zM10 10h1v1h-1zM0 11h1v1h-1zM10 11h1v1h-1zM0 12h11v1h-11z"/><path id="g8" d="M2 2h1v1h-1zM4 2h7v1h-7zM2 3h1v1h-1zM6 3h1v1h-1zM9 3h1v1h-1zM0 4h5v1h-5zM6 4h4v1h-4zM2 5h1v1h-1zM6 5h1v1h-1zM9 5h1v1h-1zM2 6h1v1h-1zM4 6h1v1h-1zM6 6h4v1h-4zM2 7h2v1h-2zM6 7h1v1h-1zM9 7h1v1h-1zM1 8h2v1h-2zM4 8h7v1h-7zM0 9h1v1h-1zM2 9h1v1h-1zM4 9h1v1h-1zM6 9h1v1h-1zM8 9h1v1h-1zM10 9h1v1h-1zM2 10h1v1h-1zM5 10h1v1h-1zM9 10h1v1h-1zM2 11h1v1h-1zM4 11h1v1h-1zM6 11h1v1h-1zM8 11h1v1h-1zM10 11h1v1h-1zM0 12h4v1h-4zM7 12h1v1h-1zM10 12h1v1h-1z"/><path id="g9" d="M1 2h5v1h-5zM10 2h1v1h-1zM1 3h1v1h-1zM5 3h1v1h-1zM9 3h1v1h-1zM1 4h5v1h-5zM8 4h1v1h-1zM1 5h1v1h-1zM5 5h1v1h-1zM7 5h1v1h-1zM10 5h1v1h-1zM1 6h5v1h-5zM9 6h1v1h-1zM3 7h1v1h-1zM8 7h1v1h-1zM0 8h8v1h-8zM1 9h1v1h-1zM5 9h1v1h-1zM10 9h1v1h-1zM1 10h5v1h-5zM9 10h1v1h-1zM1 11h1v1h-1zM3 11h1v1h-1zM5 11h1v1h-1zM8 11h1v1h-1zM0 12h1v1h-1zM2 12h2v1h-2zM6 12h2v1h-2z"/><path id="g10" d="M4 2h1v1h-1zM5 3h1v1h-1zM0 4h11v1h-11zM3 5h1v1h-1zM7 5h1v1h-1zM3 6h1v1h-1zM7 6h1v1h-1zM3 7h1v1h-1zM7 7h1v1h-1zM4 8h1v1h-1zM6 8h1v1h-1zM4 9h1v1h-1zM6 9h1v1h-1zM5 10h1v1h-1zM3 11h2v1h-2zM6 11h2v1h-2zM0 12h3v1h-3zM8 12h3v1h-3z"/><path id="g11" d="M3 2h1v1h-1zM7 2h1v1h-1zM3 3h1v1h-1zM5 3h1v1h-1zM7 3h1v1h-1zM2 4h1v1h-1zM5 4h1v1h-1zM7 4h1v1h-1zM2 5h1v1h-1zM4 5h6v1h-6zM1 6h3v1h-3zM7 6h1v1h-1zM0 7h1v1h-1zM2 7h1v1h-1zM7 7h1v1h-1zM2 8h1v1h-1zM4 8h7v1h-7zM2 9h1v1h-1zM7 9h1v1h-1zM2 10h1v1h-1zM7 10h1v1h-1zM2 11h1v1h-1zM7 11h1v1h-1zM2 12h1v1h-1zM7 12h1v1h-1z"/><path id="g12" d="M2 2h1v1h-1zM7 2h1v1h-1zM2 3h1v1h-1zM4 3h7v1h-7zM1 4h1v1h-1zM4 4h1v1h-1zM10 4h1v1h-1zM1 5h1v1h-1zM3 5h8v1h-8zM0 6h3v1h-3zM4 6h1v1h-1zM2 7h1v1h-1zM4 7h7v1h-7zM1 8h1v1h-1zM4 8h1v1h-1zM6 8h1v1h-1zM8 8h1v1h-1zM10 8h1v1h-1zM0 9h11v1h-11zM4 10h1v1h-1zM6 10h1v1h-1zM8 10h1v1h-1zM10 10h1v1h-1zM2 11h3v1h-3zM6 11h1v1h-1zM8 11h1v1h-1zM10 11h1v1h-1zM0 12h2v1h-2zM4 12h1v1h-1zM9 12h2v1h-2z"/><path id="g13" d="M2 2h1v1h-1zM6 2h4v1h-4zM0 3h5v1h-5zM6 3h1v1h-1zM9 3h1v1h-1zM1 4h1v1h-1zM6 4h4v1h-4zM1 5h2v1h-2zM0 6h1v1h-1zM2 6h1v1h-1zM5 6h6v1h-6zM0 7h5v1h-5zM6 7h1v1h-1zM9 7h1v1h-1zM2 8h1v1h-1zM6 8h2v1h-2zM9 8h1v1h-1zM2 9h3v1h-3zM6 9h1v1h-1zM8 9h2v1h-2zM0 10h3v1h-3zM6 10h1v1h-1zM9 10h2v1h-2zM2 11h1v1h-1zM4 11h6v1h-6zM2 12h1v1h-1zM9 12h1v1h-1z"/><path id="g14" d="M1 2h10v1h-10zM1 3h1v1h-1zM4 3h1v1h-1zM10 3h1v1h-1zM1 4h1v1h-1zM4 4h5v1h-5zM10 4h1v1h-1zM1 5h1v1h-1zM3 5h2v1h-2zM7 5h1v1h-1zM10 5h1v1h-1zM1 6h2v1h-2zM5 6h2v1h-2zM10 6h1v1h-1zM1 7h1v1h-1zM4 7h1v1h-1zM7 7h1v1h-1zM10 7h1v1h-1zM1 8h3v1h-3zM5 8h1v1h-1zM8 8h3v1h-3zM1 9h1v1h-1zM6 9h1v1h-1zM10 9h1v1h-1zM1 10h1v1h-1zM5 10h1v1h-1zM10 10h1v1h-1zM1 11h1v1h-1zM6 11h1v1h-1zM10 11h1v1h-1zM1 12h10v1h-10z"/><path id="g15" d="M3 2h1v1h-1zM6 2h4v1h-4zM3 3h1v1h-1zM5 3h1v1h-1zM8 3h1v1h-1zM2 4h1v1h-1zM4 4h7v1h-7zM2 5h2v1h-2zM5 5h1v1h-1zM7 5h1v1h-1zM10 5h1v1h-1zM1 6h2v1h-2zM5 6h6v1h-6zM0 7h1v1h-1zM2 7h1v1h-1zM6 7h1v1h-1zM10 7h1v1h-1zM2 8h1v1h-1zM4 8h2v1h-2zM7 8h1v1h-1zM9 8h1v1h-1zM2 9h1v1h-1zM6 9h1v1h-1zM8 9h1v1h-1zM2 10h1v1h-1zM4 10h2v1h-2zM7 10h3v1h-3zM2 11h1v1h-1zM6 11h1v1h-1zM8 11h1v1h-1zM10 11h1v1h-1zM2 12h1v1h-1zM4 12h2v1h-2zM7 12h2v1h-2z"/><path id="g16" d="M2 2h8v1h-8zM2 3h1v1h-1zM9 3h1v1h-1zM2 4h8v1h-8zM2 5h1v1h-1zM2 6h1v1h-1zM4 6h6v1h-6zM2 7h1v1h-1zM2 8h9v1h-9zM2 9h1v1h-1zM6 9h1v1h-1zM2 10h1v1h-1zM5 10h1v1h-1zM8 10h1v1h-1zM1 11h1v1h-1zM4 11h1v1h-1zM9 11h1v1h-1zM0 12h1v1h-1zM4 12h7v1h-7z"/><path id="g17" d="M1 2h1v1h-1zM5 2h1v1h-1zM7 2h1v1h-1zM2 3h1v1h-1zM5 3h1v1h-1zM7 3h1v1h-1zM2 4h1v1h-1zM5 4h5v1h-5zM4 5h1v1h-1zM7 5h1v1h-1zM0 6h3v1h-3zM4 6h7v1h-7zM2 7h1v1h-1zM6 7h1v1h-1zM8 7h1v1h-1zM2 8h1v1h-1zM6 8h1v1h-1zM8 8h1v1h-1zM10 8h1v1h-1zM2 9h1v1h-1zM5 9h1v1h-1zM8 9h1v1h-1zM10 9h1v1h-1zM2 10h1v1h-1zM4 10h1v1h-1zM9 10h2v1h-2zM1 11h1v1h-1zM3 11h1v1h-1zM0 12h1v1h-1zM4 12h7v1h-7z"/><path id="g18" d="M2 2h1v1h-1zM4 2h7v1h-7zM2 3h1v1h-1zM6 3h1v1h-1zM9 3h1v1h-1zM0 4h5v1h-5zM7 4h2v1h-2zM2 5h1v1h-1zM6 5h1v1h-1zM9 5h1v1h-1zM2 6h1v1h-1zM4 6h2v1h-2zM10 6h1v1h-1zM2 7h2v1h-2zM7 7h1v1h-1zM1 8h2v1h-2zM5 8h5v1h-5zM0 9h1v1h-1zM2 9h1v1h-1zM7 9h1v1h-1zM2 10h1v1h-1zM4 10h7v1h-7zM2 11h1v1h-1zM7 11h1v1h-1zM0 12h3v1h-3zM7 12h1v1h-1z"/><path id="g19" d="M1 2h1v1h-1zM7 2h4v1h-4zM2 3h1v1h-1zM7 3h1v1h-1zM4 4h7v1h-7zM0 5h1v1h-1zM4 5h1v1h-1zM7 5h1v1h-1zM10 5h1v1h-1zM1 6h1v1h-1zM4 6h6v1h-6zM2 7h1v1h-1zM4 7h1v1h-1zM7 7h1v1h-1zM10 7h1v1h-1zM2 8h1v1h-1zM4 8h1v1h-1zM7 8h4v1h-4zM0 9h2v1h-2zM4 9h1v1h-1zM6 9h2v1h-2zM9 9h1v1h-1zM1 10h1v1h-1zM4 10h1v1h-1zM6 10h1v1h-1zM8 10h1v1h-1zM10 10h1v1h-1zM1 11h1v1h-1zM3 11h1v1h-1zM5 11h2v1h-2zM9 11h1v1h-1zM1 12h2v1h-2zM4 12h1v1h-1zM7 12h3v1h-3z"/><path id="g20" d="M1 2h1v1h-1zM7 2h1v1h-1zM1 3h1v1h-1zM4 3h7v1h-7zM1 4h3v1h-3zM6 4h1v1h-1zM8 4h1v1h-1zM0 5h1v1h-1zM4 5h7v1h-7zM0 6h4v1h-4zM5 6h1v1h-1zM9 6h1v1h-1zM2 7h1v1h-1zM5 7h5v1h-5zM0 8h4v1h-4zM5 8h1v1h-1zM9 8h1v1h-1zM2 9h1v1h-1zM5 9h5v1h-5zM2 10h1v1h-1zM4 10h1v1h-1zM6 10h1v1h-1zM8 10h1v1h-1zM2 11h2v1h-2zM6 11h1v1h-1zM8 11h1v1h-1zM10 11h1v1h-1zM2 12h1v1h-1zM4 12h2v1h-2zM9 12h2v1h-2z"/><path id="g21" d="M3 2h1v1h-1zM7 2h1v1h-1zM3 3h1v1h-1zM7 3h1v1h-1zM2 4h1v1h-1zM8 4h1v1h-1zM2 5h1v1h-1zM8 5h1v1h-1zM1 6h1v1h-1zM9 6h1v1h-1zM0 7h1v1h-1zM2 7h7v1h-7zM10 7h1v1h-1zM4 8h1v1h-1zM8 8h1v1h-1zM4 9h1v1h-1zM8 9h1v1h-1zM3 10h1v1h-1zM8 10h1v1h-1zM2 11h1v1h-1zM8 11h1v1h-1zM0 12h2v1h-2zM6 12h2v1h-2z"/><path id="g22" d="M2 2h1v1h-1zM8 2h2v1h-2zM2 3h1v1h-1zM5 3h3v1h-3zM0 4h6v1h-6zM2 5h1v1h-1zM5 5h1v1h-1zM2 6h1v1h-1zM5 6h6v1h-6zM2 7h2v1h-2zM5 7h1v1h-1zM8 7h1v1h-1zM1 8h2v1h-2zM4 8h2v1h-2zM8 8h1v1h-1zM0 9h1v1h-1zM2 9h1v1h-1zM5 9h1v1h-1zM8 9h1v1h-1zM2 10h1v1h-1zM5 10h1v1h-1zM8 10h1v1h-1zM2 11h1v1h-1zM4 11h1v1h-1zM8 11h1v1h-1zM2 12h2v1h-2zM8 12h1v1h-1z"/><path id="g23" d="M1 2h1v1h-1zM5 2h5v1h-5zM2 3h1v1h-1zM5 3h1v1h-1zM9 3h1v1h-1zM0 4h4v1h-4zM5 4h1v1h-1zM7 4h1v1h-1zM9 4h1v1h-1zM3 5h1v1h-1zM5 5h1v1h-1zM7 5h1v1h-1zM9 5h1v1h-1zM2 6h1v1h-1zM5 6h1v1h-1zM7 6h1v1h-1zM9 6h1v1h-1zM1 7h3v1h-3zM5 7h1v1h-1zM7 7h1v1h-1zM9 7h1v1h-1zM0 8h1v1h-1zM2 8h1v1h-1zM5 8h1v1h-1zM7 8h1v1h-1zM9 8h1v1h-1zM2 9h1v1h-1zM7 9h1v1h-1zM2 10h1v1h-1zM6 10h2v1h-2zM10 10h1v1h-1zM2 11h1v1h-1zM5 11h1v1h-1zM7 11h1v1h-1zM10 11h1v1h-1zM2 12h1v1h-1zM4 12h1v1h-1zM8 12h3v1h-3z"/><path id="g24" d="M6 2h1v1h-1zM1 3h10v1h-10zM1 4h1v1h-1zM3 4h1v1h-1zM8 4h1v1h-1zM10 4h1v1h-1zM2 5h1v1h-1zM5 5h1v1h-1zM9 5h1v1h-1zM1 6h10v1h-10zM2 7h1v1h-1zM5 7h1v1h-1zM9 7h1v1h-1zM2 8h1v1h-1zM4 8h6v1h-6zM2 9h3v1h-3zM7 9h1v1h-1zM9 9h1v1h-1zM2 10h1v1h-1zM5 10h2v1h-2zM9 10h1v1h-1zM2 11h1v1h-1zM4 11h1v1h-1zM7 11h1v1h-1zM9 11h1v1h-1zM2 12h8v1h-8z"/><path id="g25" d="M1 3h9v1h-9zM1 4h1v1h-1zM9 4h1v1h-1zM1 5h1v1h-1zM9 5h1v1h-1zM1 6h1v1h-1zM9 6h1v1h-1zM1 7h1v1h-1zM9 7h1v1h-1zM1 8h1v1h-1zM9 8h1v1h-1zM1 9h1v1h-1zM9 9h1v1h-1zM1 10h9v1h-9zM1 11h1v1h-1zM9 11h1v1h-1z"/><path id="g26" d="M3 2h1v1h-1zM1 3h5v1h-5zM7 3h4v1h-4zM3 4h1v1h-1zM7 4h1v1h-1zM10 4h1v1h-1zM1 5h5v1h-5zM7 5h1v1h-1zM9 5h1v1h-1zM3 6h1v1h-1zM7 6h1v1h-1zM10 6h1v1h-1zM0 7h6v1h-6zM7 7h4v1h-4zM2 8h1v1h-1zM5 8h1v1h-1zM7 8h1v1h-1zM1 9h9v1h-9zM2 10h1v1h-1zM5 10h1v1h-1zM9 10h1v1h-1zM2 11h1v1h-1zM5 11h1v1h-1zM8 11h2v1h-2zM5 12h1v1h-1z"/><path id="g27" d="M7 2h1v1h-1zM1 3h4v1h-4zM7 3h1v1h-1zM1 4h1v1h-1zM4 4h1v1h-1zM7 4h1v1h-1zM1 5h1v1h-1zM4 5h1v1h-1zM6 5h5v1h-5zM1 6h4v1h-4zM7 6h1v1h-1zM10 6h1v1h-1zM1 7h1v1h-1zM4 7h1v1h-1zM7 7h1v1h-1zM10 7h1v1h-1zM1 8h4v1h-4zM7 8h1v1h-1zM10 8h1v1h-1zM1 9h1v1h-1zM4 9h1v1h-1zM7 9h1v1h-1zM10 9h1v1h-1zM1 10h1v1h-1zM3 10h4v1h-4zM10 10h1v1h-1zM0 11h3v1h-3zM6 11h1v1h-1zM8 11h1v1h-1zM10 11h1v1h-1zM5 12h1v1h-1zM9 12h1v1h-1z"/><path id="g28" d="M2 2h1v1h-1zM6 2h1v1h-1zM8 2h1v1h-1zM2 3h1v1h-1zM4 3h7v1h-7zM0 4h4v1h-4zM6 4h1v1h-1zM8 4h1v1h-1zM2 5h1v1h-1zM5 5h5v1h-5zM2 6h2v1h-2zM5 6h1v1h-1zM9 6h1v1h-1zM1 7h2v1h-2zM4 7h6v1h-6zM1 8h2v1h-2zM5 8h1v1h-1zM9 8h1v1h-1zM0 9h1v1h-1zM2 9h1v1h-1zM4 9h7v1h-7zM2 10h1v1h-1zM7 10h1v1h-1zM2 11h1v1h-1zM6 11h1v1h-1zM8 11h1v1h-1zM2 12h1v1h-1zM4 12h2v1h-2zM9 12h2v1h-2z"/><path id="g29" d="M6 2h1v1h-1zM8 2h1v1h-1zM6 3h1v1h-1zM9 3h1v1h-1zM6 4h1v1h-1zM0 5h11v1h-11zM6 6h1v1h-1zM1 7h4v1h-4zM6 7h1v1h-1zM3 8h1v1h-1zM6 8h1v1h-1zM3 9h1v1h-1zM7 9h1v1h-1zM3 10h1v1h-1zM7 10h1v1h-1zM10 10h1v1h-1zM3 11h2v1h-2zM8 11h1v1h-1zM10 11h1v1h-1zM0 12h3v1h-3zM9 12h2v1h-2z"/><path id="g30" d="M0 3h11v1h-11zM5 4h1v1h-1zM5 5h1v1h-1zM2 6h1v1h-1zM5 6h1v1h-1zM2 7h1v1h-1zM5 7h5v1h-5zM2 8h1v1h-1zM5 8h1v1h-1zM2 9h1v1h-1zM5 9h1v1h-1zM2 10h1v1h-1zM5 10h1v1h-1zM2 11h1v1h-1zM5 11h1v1h-1zM0 12h11v1h-11z"/><path id="g31" d="M2 2h1v1h-1zM5 2h1v1h-1zM8 2h1v1h-1zM1 3h10v1h-10zM1 4h1v1h-1zM10 4h1v1h-1zM0 5h1v1h-1zM3 5h6v1h-6zM10 5h1v1h-1zM3 6h1v1h-1zM8 6h1v1h-1zM3 7h6v1h-6zM5 8h1v1h-1zM2 9h8v1h-8zM2 10h1v1h-1zM5 10h1v1h-1zM9 10h1v1h-1zM2 11h1v1h-1zM5 11h1v1h-1zM8 11h2v1h-2zM5 12h1v1h-1z"/><path id="g32" d="M0 2h11v1h-11zM6 3h1v1h-1zM6 4h1v1h-1zM5 5h1v1h-1zM4 6h2v1h-2zM7 6h1v1h-1zM3 7h1v1h-1zM5 7h1v1h-1zM8 7h1v1h-1zM2 8h1v1h-1zM5 8h1v1h-1zM9 8h1v1h-1zM1 9h1v1h-1zM5 9h1v1h-1zM10 9h1v1h-1zM0 10h1v1h-1zM5 10h1v1h-1zM5 11h1v1h-1zM5 12h1v1h-1z"/><path id="g33" d="M1 2h1v1h-1zM5 2h5v1h-5zM2 3h1v1h-1zM7 3h1v1h-1zM2 4h9v1h-9zM5 5h1v1h-1zM7 5h1v1h-1zM9 5h1v1h-1zM0 6h3v1h-3zM4 6h5v1h-5zM10 6h1v1h-1zM2 7h2v1h-2zM6 7h1v1h-1zM8 7h1v1h-1zM2 8h1v1h-1zM6 8h1v1h-1zM8 8h2v1h-2zM2 9h1v1h-1zM5 9h1v1h-1zM9 9h1v1h-1zM2 10h1v1h-1zM4 10h1v1h-1zM7 10h1v1h-1zM9 10h1v1h-1zM1 11h1v1h-1zM3 11h1v1h-1zM8 11h1v1h-1zM0 12h1v1h-1zM4 12h7v1h-7z"/><path id="g34" d="M6 2h5v1h-5zM0 3h4v1h-4zM6 3h1v1h-1zM10 3h1v1h-1zM0 4h1v1h-1zM3 4h1v1h-1zM6 4h1v1h-1zM10 4h1v1h-1zM0 5h1v1h-1zM3 5h1v1h-1zM6 5h5v1h-5zM0 6h4v1h-4zM6 6h1v1h-1zM10 6h1v1h-1zM0 7h1v1h-1zM3 7h1v1h-1zM6 7h1v1h-1zM10 7h1v1h-1zM0 8h1v1h-1zM3 8h1v1h-1zM6 8h5v1h-5zM0 9h4v1h-4zM6 9h1v1h-1zM10 9h1v1h-1zM5 10h1v1h-1zM10 10h1v1h-1zM4 11h1v1h-1zM8 11h1v1h-1zM10 11h1v1h-1zM2 12h2v1h-2zM9 12h1v1h-1z"/><path id="g35" d="M5 2h1v1h-1zM1 3h10v1h-10zM1 4h1v1h-1zM4 4h1v1h-1zM7 4h1v1h-1zM1 5h9v1h-9zM1 6h1v1h-1zM4 6h1v1h-1zM7 6h1v1h-1zM1 7h1v1h-1zM4 7h4v1h-4zM1 8h1v1h-1zM1 9h1v1h-1zM3 9h6v1h-6zM1 10h1v1h-1zM4 10h1v1h-1zM7 10h1v1h-1zM0 11h1v1h-1zM5 11h2v1h-2zM0 12h1v1h-1zM2 12h3v1h-3zM7 12h3v1h-3z"/><path id="g36" d="M0 2h1v1h-1zM6 2h1v1h-1zM1 3h1v1h-1zM3 3h8v1h-8zM5 4h1v1h-1zM0 5h1v1h-1zM4 5h1v1h-1zM8 5h1v1h-1zM1 6h1v1h-1zM3 6h7v1h-7zM2 7h1v1h-1zM9 7h1v1h-1zM2 8h1v1h-1zM4 8h1v1h-1zM6 8h1v1h-1zM8 8h1v1h-1zM0 9h2v1h-2zM4 9h1v1h-1zM6 9h1v1h-1zM8 9h1v1h-1zM1 10h1v1h-1zM4 10h1v1h-1zM6 10h1v1h-1zM8 10h1v1h-1zM10 10h1v1h-1zM1 11h1v1h-1zM4 11h1v1h-1zM6 11h1v1h-1zM8 11h1v1h-1zM10 11h1v1h-1zM1 12h1v1h-1zM3 12h1v1h-1zM6 12h1v1h-1zM9 12h2v1h-2z"/><path id="g37" d="M2 2h7v1h-7zM2 3h1v1h-1zM8 3h1v1h-1zM2 4h7v1h-7zM2 5h1v1h-1zM8 5h1v1h-1zM0 6h11v1h-11zM2 7h1v1h-1zM5 7h1v1h-1zM8 7h1v1h-1zM2 8h7v1h-7zM2 9h1v1h-1zM5 9h1v1h-1zM8 9h1v1h-1zM1 10h9v1h-9zM5 11h1v1h-1zM0 12h11v1h-11z"/><path id="g38" d="M8 2h1v1h-1zM0 3h4v1h-4zM8 3h1v1h-1zM3 4h8v1h-8zM0 5h1v1h-1zM3 5h1v1h-1zM8 5h1v1h-1zM1 6h1v1h-1zM3 6h1v1h-1zM8 6h1v1h-1zM2 7h1v1h-1zM5 7h1v1h-1zM8 7h1v1h-1zM2 8h1v1h-1zM6 8h1v1h-1zM8 8h1v1h-1zM1 9h1v1h-1zM3 9h1v1h-1zM8 9h1v1h-1zM1 10h1v1h-1zM3 10h1v1h-1zM8 10h1v1h-1zM0 11h1v1h-1zM6 11h1v1h-1zM8 11h1v1h-1zM7 12h1v1h-1z"/><path id="g39" d="M5 2h1v1h-1zM0 3h11v1h-11zM3 4h1v1h-1zM8 4h1v1h-1zM4 5h1v1h-1zM7 5h1v1h-1zM5 6h2v1h-2zM3 7h2v1h-2zM7 7h2v1h-2zM0 8h3v1h-3zM9 8h2v1h-2zM4 9h1v1h-1zM7 9h1v1h-1zM4 10h1v1h-1zM7 10h1v1h-1zM3 11h1v1h-1zM7 11h1v1h-1zM1 12h2v1h-2zM7 12h1v1h-1z"/><path id="g40" d="M2 2h1v1h-1zM5 2h1v1h-1zM9 2h1v1h-1zM2 3h1v1h-1zM6 3h1v1h-1zM8 3h1v1h-1zM0 4h11v1h-11zM2 5h1v1h-1zM7 5h1v1h-1zM1 6h3v1h-3zM5 6h5v1h-5zM1 7h2v1h-2zM7 7h1v1h-1zM0 8h1v1h-1zM2 8h1v1h-1zM7 8h1v1h-1zM2 9h1v1h-1zM4 9h7v1h-7zM2 10h1v1h-1zM7 10h1v1h-1zM2 11h1v1h-1zM7 11h1v1h-1zM2 12h1v1h-1zM7 12h1v1h-1z"/><path id="g41" d="M5 2h1v1h-1zM1 3h1v1h-1zM5 3h1v1h-1zM9 3h1v1h-1zM2 4h1v1h-1zM5 4h1v1h-1zM8 4h1v1h-1zM3 5h1v1h-1zM5 5h1v1h-1zM7 5h1v1h-1zM1 6h9v1h-9zM9 7h1v1h-1zM9 8h1v1h-1zM2 9h8v1h-8zM9 10h1v1h-1zM9 11h1v1h-1zM1 12h9v1h-9z"/><path id="g42" d="M3 2h1v1h-1zM8 2h1v1h-1zM4 3h1v1h-1zM7 3h1v1h-1zM1 4h10v1h-10zM2 6h4v1h-4zM7 6h1v1h-1zM9 6h1v1h-1zM2 7h1v1h-1zM5 7h1v1h-1zM7 7h1v1h-1zM9 7h1v1h-1zM2 8h4v1h-4zM7 8h1v1h-1zM9 8h1v1h-1zM2 9h1v1h-1zM5 9h1v1h-1zM7 9h1v1h-1zM9 9h1v1h-1zM2 10h4v1h-4zM7 10h1v1h-1zM9 10h1v1h-1zM2 11h1v1h-1zM5 11h1v1h-1zM9 11h1v1h-1zM2 12h1v1h-1zM4 12h2v1h-2zM7 12h3v1h-3z"/><path id="g43" d="M2 2h7v1h-7zM2 3h1v1h-1zM8 3h1v1h-1zM2 4h7v1h-7zM10 4h1v1h-1zM2 5h1v1h-1zM10 5h1v1h-1zM3 6h8v1h-8zM7 7h1v1h-1zM0 8h11v1h-11zM3 9h1v1h-1zM7 9h1v1h-1zM4 10h1v1h-1zM7 10h1v1h-1zM4 11h1v1h-1zM7 11h1v1h-1zM6 12h2v1h-2z"/><path id="g44" d="M2 2h1v1h-1zM7 2h1v1h-1zM1 3h4v1h-4zM8 3h1v1h-1zM1 4h1v1h-1zM4 4h7v1h-7zM1 5h2v1h-2zM4 5h1v1h-1zM1 6h1v1h-1zM3 6h2v1h-2zM6 6h3v1h-3zM0 7h5v1h-5zM6 7h1v1h-1zM8 7h1v1h-1zM1 8h1v1h-1zM4 8h1v1h-1zM6 8h1v1h-1zM8 8h1v1h-1zM1 9h2v1h-2zM4 9h1v1h-1zM6 9h1v1h-1zM8 9h1v1h-1zM1 10h1v1h-1zM3 10h2v1h-2zM6 10h1v1h-1zM8 10h1v1h-1zM10 10h1v1h-1zM1 11h1v1h-1zM4 11h1v1h-1zM6 11h1v1h-1zM8 11h1v1h-1zM10 11h1v1h-1zM0 12h1v1h-1zM3 12h3v1h-3zM8 12h3v1h-3z"/><path id="g45" d="M1 2h4v1h-4zM6 2h4v1h-4zM1 3h1v1h-1zM4 3h1v1h-1zM6 3h1v1h-1zM9 3h1v1h-1zM1 4h1v1h-1zM4 4h1v1h-1zM6 4h1v1h-1zM9 4h1v1h-1zM1 5h4v1h-4zM6 5h4v1h-4zM5 6h1v1h-1zM8 6h1v1h-1zM0 7h11v1h-11zM3 8h1v1h-1zM7 8h1v1h-1zM0 9h5v1h-5zM6 9h5v1h-5zM1 10h1v1h-1zM4 10h1v1h-1zM6 10h1v1h-1zM9 10h1v1h-1zM1 11h1v1h-1zM4 11h1v1h-1zM6 11h1v1h-1zM9 11h1v1h-1zM1 12h4v1h-4zM6 12h4v1h-4z"/><path id="g46" d="M5 2h1v1h-1zM0 3h11v1h-11zM5 4h1v1h-1zM2 5h7v1h-7zM2 6h1v1h-1zM8 6h1v1h-1zM2 7h7v1h-7zM2 8h1v1h-1zM8 8h1v1h-1zM2 9h7v1h-7zM2 10h1v1h-1zM8 10h1v1h-1zM2 11h1v1h-1zM8 11h1v1h-1zM0 12h11v1h-11z"/><path id="g47" d="M4 2h1v1h-1zM5 3h1v1h-1zM0 4h11v1h-11zM4 5h1v1h-1zM4 6h1v1h-1zM4 7h5v1h-5zM3 8h1v1h-1zM8 8h1v1h-1zM3 9h1v1h-1zM8 9h1v1h-1zM2 10h1v1h-1zM8 10h1v1h-1zM1 11h1v1h-1zM8 11h1v1h-1zM0 12h1v1h-1zM5 12h3v1h-3z"/><path id="g48" d="M3 2h1v1h-1zM6 2h1v1h-1zM3 3h1v1h-1zM7 3h1v1h-1zM2 4h1v1h-1zM4 4h7v1h-7zM2 5h1v1h-1zM1 6h2v1h-2zM5 6h5v1h-5zM0 7h1v1h-1zM2 7h1v1h-1zM2 8h1v1h-1zM5 8h5v1h-5zM2 9h1v1h-1zM2 10h1v1h-1zM5 10h5v1h-5zM2 11h1v1h-1zM5 11h1v1h-1zM9 11h1v1h-1zM2 12h1v1h-1zM5 12h5v1h-5z"/><path id="g49" d="M4 2h1v1h-1zM2 3h7v1h-7zM2 4h1v1h-1zM8 4h1v1h-1zM2 5h7v1h-7zM2 6h1v1h-1zM8 6h1v1h-1zM2 7h7v1h-7zM2 8h1v1h-1zM8 8h1v1h-1zM2 9h7v1h-7zM1 10h1v1h-1zM3 10h1v1h-1zM5 10h1v1h-1zM9 10h1v1h-1zM1 11h1v1h-1zM3 11h1v1h-1zM6 11h1v1h-1zM8 11h1v1h-1zM10 11h1v1h-1zM0 12h1v1h-1zM4 12h5v1h-5z"/><path id="g50" d="M2 2h1v1h-1zM6 2h5v1h-5zM0 3h5v1h-5zM8 3h1v1h-1zM1 4h1v1h-1zM3 4h1v1h-1zM6 4h5v1h-5zM0 5h5v1h-5zM6 5h1v1h-1zM10 5h1v1h-1zM0 6h1v1h-1zM4 6h1v1h-1zM6 6h1v1h-1zM8 6h1v1h-1zM10 6h1v1h-1zM0 7h1v1h-1zM3 7h1v1h-1zM6 7h1v1h-1zM8 7h1v1h-1zM10 7h1v1h-1zM0 8h3v1h-3zM4 8h1v1h-1zM6 8h1v1h-1zM8 8h1v1h-1zM10 8h1v1h-1zM0 9h1v1h-1zM3 9h1v1h-1zM6 9h1v1h-1zM8 9h1v1h-1zM10 9h1v1h-1zM0 10h3v1h-3zM4 10h1v1h-1zM6 10h1v1h-1zM8 10h1v1h-1zM10 10h1v1h-1zM0 11h1v1h-1zM3 11h1v1h-1zM7 11h1v1h-1zM9 11h1v1h-1zM0 12h3v1h-3zM5 12h2v1h-2zM10 12h1v1h-1z"/><path id="g51" d="M4 2h1v1h-1zM3 3h6v1h-6zM2 4h1v1h-1zM6 4h1v1h-1zM1 5h9v1h-9zM0 6h1v1h-1zM2 6h1v1h-1zM5 6h1v1h-1zM9 6h1v1h-1zM2 7h1v1h-1zM5 7h1v1h-1zM9 7h1v1h-1zM2 8h8v1h-8zM2 9h1v1h-1zM2 10h1v1h-1zM10 10h1v1h-1zM2 11h1v1h-1zM10 11h1v1h-1zM3 12h8v1h-8z"/><path id="g52" d="M2 2h1v1h-1zM8 2h2v1h-2zM2 3h1v1h-1zM5 3h3v1h-3zM0 4h6v1h-6zM2 5h1v1h-1zM5 5h1v1h-1zM2 6h1v1h-1zM5 6h5v1h-5zM1 7h3v1h-3zM5 7h1v1h-1zM9 7h1v1h-1zM1 8h2v1h-2zM4 8h3v1h-3zM9 8h1v1h-1zM0 9h1v1h-1zM2 9h1v1h-1zM5 9h1v1h-1zM7 9h2v1h-2zM2 10h1v1h-1zM4 10h1v1h-1zM8 10h1v1h-1zM2 11h1v1h-1zM4 11h1v1h-1zM7 11h1v1h-1zM9 11h1v1h-1zM2 12h2v1h-2zM5 12h2v1h-2zM10 12h1v1h-1z"/><path id="g53" d="M1 2h1v1h-1zM4 2h7v1h-7zM2 3h1v1h-1zM4 3h1v1h-1zM7 3h1v1h-1zM10 3h1v1h-1zM4 4h1v1h-1zM6 4h3v1h-3zM10 4h1v1h-1zM0 5h3v1h-3zM4 5h1v1h-1zM7 5h1v1h-1zM10 5h1v1h-1zM2 6h1v1h-1zM4 6h7v1h-7zM2 7h1v1h-1zM4 7h1v1h-1zM10 7h1v1h-1zM2 8h1v1h-1zM4 8h1v1h-1zM6 8h3v1h-3zM10 8h1v1h-1zM2 9h1v1h-1zM4 9h1v1h-1zM6 9h1v1h-1zM8 9h1v1h-1zM10 9h1v1h-1zM2 10h3v1h-3zM6 10h3v1h-3zM10 10h1v1h-1zM2 11h1v1h-1zM4 11h1v1h-1zM10 11h1v1h-1zM3 12h1v1h-1zM8 12h3v1h-3z"/><path id="g54" d="M3 2h1v1h-1zM7 2h1v1h-1zM0 3h11v1h-11zM1 4h1v1h-1zM3 4h1v1h-1zM5 4h1v1h-1zM7 4h1v1h-1zM9 4h1v1h-1zM1 5h5v1h-5zM8 5h1v1h-1zM2 6h3v1h-3zM7 6h1v1h-1zM9 6h1v1h-1zM1 7h1v1h-1zM3 7h1v1h-1zM5 7h2v1h-2zM10 7h1v1h-1zM1 8h9v1h-9zM5 9h1v1h-1zM2 10h1v1h-1zM5 10h4v1h-4zM2 11h1v1h-1zM5 11h1v1h-1zM0 12h11v1h-11z"/><path id="g55" d="M3 2h1v1h-1zM7 2h1v1h-1zM0 3h11v1h-11zM3 4h1v1h-1zM7 4h1v1h-1zM0 5h11v1h-11zM0 6h1v1h-1zM10 6h1v1h-1zM1 7h9v1h-9zM0 8h2v1h-2zM3 8h1v1h-1zM5 8h1v1h-1zM9 8h1v1h-1zM2 9h1v1h-1zM5 9h2v1h-2zM8 9h1v1h-1zM0 10h2v1h-2zM4 10h1v1h-1zM6 10h2v1h-2zM3 11h1v1h-1zM6 11h1v1h-1zM8 11h1v1h-1zM0 12h3v1h-3zM4 12h2v1h-2zM9 12h2v1h-2z"/><path id="g56" d="M3 2h1v1h-1zM8 2h2v1h-2zM1 3h1v1h-1zM3 3h1v1h-1zM5 3h3v1h-3zM1 4h1v1h-1zM3 4h1v1h-1zM5 4h1v1h-1zM1 5h10v1h-10zM1 6h1v1h-1zM5 6h2v1h-2zM9 6h1v1h-1zM1 7h1v1h-1zM5 7h1v1h-1zM7 7h1v1h-1zM9 7h1v1h-1zM1 8h3v1h-3zM5 8h1v1h-1zM7 8h1v1h-1zM9 8h1v1h-1zM1 9h1v1h-1zM3 9h1v1h-1zM5 9h1v1h-1zM8 9h1v1h-1zM1 10h1v1h-1zM3 10h1v1h-1zM5 10h1v1h-1zM8 10h1v1h-1zM0 11h1v1h-1zM3 11h1v1h-1zM5 11h1v1h-1zM7 11h1v1h-1zM9 11h1v1h-1zM0 12h1v1h-1zM3 12h2v1h-2zM6 12h1v1h-1zM10 12h1v1h-1z"/><path id="g57" d="M1 2h1v1h-1zM4 2h6v1h-6zM2 3h1v1h-1zM6 3h1v1h-1zM8 3h1v1h-1zM2 4h1v1h-1zM4 4h7v1h-7zM4 5h1v1h-1zM7 5h1v1h-1zM10 5h1v1h-1zM0 6h3v1h-3zM4 6h7v1h-7zM2 7h1v1h-1zM4 7h1v1h-1zM7 7h1v1h-1zM10 7h1v1h-1zM2 8h1v1h-1zM4 8h7v1h-7zM2 9h1v1h-1zM4 9h1v1h-1zM7 9h1v1h-1zM10 9h1v1h-1zM2 10h1v1h-1zM4 10h1v1h-1zM7 10h1v1h-1zM9 10h2v1h-2zM1 11h1v1h-1zM3 11h1v1h-1zM0 12h1v1h-1zM4 12h7v1h-7z"/><path id="g58" d="M1 2h1v1h-1zM5 2h1v1h-1zM9 2h1v1h-1zM2 3h1v1h-1zM6 3h1v1h-1zM8 3h1v1h-1zM2 4h1v1h-1zM4 4h7v1h-7zM7 5h1v1h-1zM0 6h3v1h-3zM5 6h5v1h-5zM2 7h1v1h-1zM5 7h1v1h-1zM9 7h1v1h-1zM2 8h1v1h-1zM5 8h5v1h-5zM2 9h1v1h-1zM5 9h1v1h-1zM9 9h1v1h-1zM2 10h1v1h-1zM5 10h5v1h-5zM1 11h1v1h-1zM3 11h1v1h-1zM0 12h1v1h-1zM4 12h7v1h-7z"/><path id="g59" d="M0 2h4v1h-4zM5 2h1v1h-1zM0 3h1v1h-1zM3 3h1v1h-1zM5 3h5v1h-5zM0 4h1v1h-1zM3 4h1v1h-1zM5 4h1v1h-1zM9 4h1v1h-1zM0 5h1v1h-1zM3 5h2v1h-2zM6 5h1v1h-1zM8 5h1v1h-1zM0 6h4v1h-4zM7 6h1v1h-1zM2 7h1v1h-1zM6 7h1v1h-1zM8 7h1v1h-1zM0 8h1v1h-1zM2 8h2v1h-2zM5 8h1v1h-1zM9 8h1v1h-1zM0 9h1v1h-1zM2 9h1v1h-1zM4 9h7v1h-7zM0 10h1v1h-1zM2 10h1v1h-1zM5 10h1v1h-1zM9 10h1v1h-1zM0 11h1v1h-1zM2 11h2v1h-2zM5 11h1v1h-1zM9 11h1v1h-1zM0 12h2v1h-2zM5 12h5v1h-5z"/><path id="g60" d="M3 2h1v1h-1zM5 2h5v1h-5zM2 3h1v1h-1zM8 3h1v1h-1zM1 4h1v1h-1zM4 4h1v1h-1zM7 4h1v1h-1zM0 5h1v1h-1zM3 5h1v1h-1zM6 5h1v1h-1zM8 5h1v1h-1zM2 6h1v1h-1zM5 6h1v1h-1zM9 6h1v1h-1zM1 7h2v1h-2zM4 7h1v1h-1zM10 7h1v1h-1zM0 8h1v1h-1zM2 8h1v1h-1zM5 8h5v1h-5zM2 9h1v1h-1zM7 9h1v1h-1zM2 10h1v1h-1zM7 10h1v1h-1zM2 11h1v1h-1zM7 11h1v1h-1zM2 12h1v1h-1zM4 12h7v1h-7z"/><path id="g61" d="M1 2h1v1h-1zM4 2h6v1h-6zM2 3h1v1h-1zM6 3h1v1h-1zM6 4h1v1h-1zM0 5h1v1h-1zM3 5h8v1h-8zM1 6h1v1h-1zM4 6h1v1h-1zM8 6h1v1h-1zM2 7h2v1h-2zM6 7h1v1h-1zM9 7h2v1h-2zM2 8h1v1h-1zM6 8h1v1h-1zM0 9h2v1h-2zM4 9h1v1h-1zM6 9h2v1h-2zM9 9h1v1h-1zM1 10h1v1h-1zM4 10h1v1h-1zM6 10h1v1h-1zM8 10h1v1h-1zM10 10h1v1h-1zM1 11h1v1h-1zM3 11h1v1h-1zM6 11h1v1h-1zM8 11h1v1h-1zM10 11h1v1h-1zM1 12h1v1h-1zM5 12h2v1h-2z"/><path id="g62" d="M2 2h1v1h-1zM2 3h1v1h-1zM0 4h6v1h-6zM7 4h4v1h-4zM2 5h1v1h-1zM5 5h1v1h-1zM7 5h1v1h-1zM10 5h1v1h-1zM2 6h1v1h-1zM5 6h1v1h-1zM7 6h1v1h-1zM10 6h1v1h-1zM2 7h1v1h-1zM5 7h1v1h-1zM7 7h1v1h-1zM10 7h1v1h-1zM2 8h1v1h-1zM5 8h1v1h-1zM7 8h1v1h-1zM10 8h1v1h-1zM2 9h1v1h-1zM5 9h1v1h-1zM7 9h1v1h-1zM10 9h1v1h-1zM1 10h1v1h-1zM5 10h1v1h-1zM7 10h1v1h-1zM10 10h1v1h-1zM1 11h1v1h-1zM3 11h1v1h-1zM5 11h1v1h-1zM7 11h4v1h-4zM0 12h1v1h-1zM4 12h1v1h-1zM7 12h1v1h-1zM10 12h1v1h-1z"/><path id="g63" d="M5 2h1v1h-1zM5 3h1v1h-1zM1 4h9v1h-9zM5 5h1v1h-1zM0 6h11v1h-11zM5 7h1v1h-1zM4 8h3v1h-3zM3 9h1v1h-1zM5 9h1v1h-1zM7 9h1v1h-1zM2 10h1v1h-1zM5 10h1v1h-1zM8 10h1v1h-1zM0 11h2v1h-2zM5 11h1v1h-1zM9 11h2v1h-2zM5 12h1v1h-1z"/><path id="g64" d="M2 2h1v1h-1zM2 3h1v1h-1zM5 3h6v1h-6zM0 4h5v1h-5zM8 4h1v1h-1zM2 5h1v1h-1zM8 5h1v1h-1zM2 6h1v1h-1zM4 6h1v1h-1zM8 6h1v1h-1zM2 7h2v1h-2zM8 7h1v1h-1zM1 8h2v1h-2zM8 8h1v1h-1zM0 9h1v1h-1zM2 9h1v1h-1zM8 9h1v1h-1zM2 10h1v1h-1zM8 10h1v1h-1zM2 11h1v1h-1zM8 11h1v1h-1zM0 12h3v1h-3zM6 12h3v1h-3z"/><path id="g65" d="M1 2h9v1h-9zM3 3h1v1h-1zM7 3h1v1h-1zM3 4h1v1h-1zM7 4h1v1h-1zM3 5h1v1h-1zM7 5h1v1h-1zM3 6h1v1h-1zM7 6h1v1h-1zM0 7h11v1h-11zM3 8h1v1h-1zM7 8h1v1h-1zM2 9h1v1h-1zM7 9h1v1h-1zM2 10h1v1h-1zM7 10h1v1h-1zM1 11h1v1h-1zM7 11h1v1h-1zM0 12h1v1h-1zM7 12h1v1h-1z"/><path id="g66" d="M2 2h1v1h-1zM7 2h1v1h-1zM2 3h1v1h-1zM5 3h1v1h-1zM7 3h1v1h-1zM10 3h1v1h-1zM0 4h5v1h-5zM6 4h2v1h-2zM9 4h1v1h-1zM2 5h1v1h-1zM7 5h1v1h-1zM2 6h1v1h-1zM5 6h6v1h-6zM1 7h3v1h-3zM10 7h1v1h-1zM1 8h2v1h-2zM4 8h1v1h-1zM10 8h1v1h-1zM0 9h1v1h-1zM2 9h1v1h-1zM5 9h6v1h-6zM2 10h1v1h-1zM10 10h1v1h-1zM2 11h1v1h-1zM10 11h1v1h-1zM2 12h1v1h-1zM5 12h6v1h-6z"/></defs><g fill="#ffffff"><use href="#g0" x="531" y="7"/><use href="#g0" x="532" y="7"/><use href="#g1" x="543" y="7"/><use href="#g1" x="544" y="7"/><use href="#g2" x="555" y="7"/><use href="#g2" x="556" y="7"/><use href="#g3" x="567" y="7"/><use href="#g3" x="568" y="7"/></g><g fill="#1e1e1e"><use href="#g4" x="604" y="7"/><use href="#g4" x="605" y="7"/><use href="#g5" x="616" y="7"/><use href="#g5" x="617" y="7"/></g><g fill="#1e1e1e"><use href="#g6" x="652" y="7"/><use href="#g6" x="653" y="7"/><use href="#g7" x="664" y="7"/><use href="#g7" x="665" y="7"/></g><g fill="#1e1e1e"><use href="#g8" x="700" y="7"/><use href="#g8" x="701" y="7"/><use href="#g9" x="712" y="7"/><use href="#g9" x="713" y="7"/></g><g fill="#000"><use href="#g10" x="14" y="32"/><use href="#g11" x="26" y="32"/></g><g fill="#000"><use href="#g12" x="74" y="32"/><use href="#g13" x="86" y="32"/></g><g fill="#000"><use href="#g14" x="134" y="32"/><use href="#g15" x="146" y="32"/></g><g fill="#000"><use href="#g14" x="193" y="32"/><use href="#g16" x="205" y="32"/></g><g fill="#000"><use href="#g17" x="251" y="32"/><use href="#g18" x="263" y="32"/></g><g fill="#000"><use href="#g19" x="311" y="32"/><use href="#g20" x="323" y="32"/></g><g fill="#000"><use href="#g21" x="372" y="32"/><use href="#g22" x="384" y="32"/></g><g fill="#000"><use href="#g23" x="481" y="32"/><use href="#g14" x="493" y="32"/></g><g fill="#000"><use href="#g24" x="542" y="32"/><use href="#g25" x="554" y="32"/></g><g fill="#000"><use href="#g26" x="606" y="32"/><use href="#g27" x="618" y="32"/></g><g fill="#000"></g><g fill="#000"><use href="#g28" x="174" y="61"/><use href="#g29" x="186" y="61"/></g><g fill="#000"><use href="#g30" x="222" y="61"/><use href="#g31" x="234" y="61"/></g><g fill="#000"><use href="#g32" x="331" y="60"/><use href="#g33" x="343" y="60"/><use href="#g34" x="355" y="60"/><use href="#g35" x="367" y="60"/></g><g fill="#000"><use href="#g36" x="481" y="61"/><use href="#g37" x="493" y="61"/></g><g fill="#000"><use href="#g38" x="619" y="59"/><use href="#g39" x="631" y="59"/></g><g fill="#a8a898"><use href="#g40" x="648" y="62"/><use href="#g1" x="660" y="62"/></g><g fill="#a8a898"><use href="#g41" x="687" y="63"/><use href="#g42" x="699" y="63"/><use href="#g14" x="711" y="63"/><use href="#g16" x="723" y="63"/></g><g fill="#505050"><use href="#g43" x="727" y="99"/><use href="#g44" x="739" y="99"/><use href="#g45" x="751" y="99"/></g><g fill="#444444"><use href="#g46" x="776" y="99"/><use href="#g47" x="788" y="99"/><use href="#g14" x="800" y="99"/></g><g fill="#444444"><use href="#g48" x="825" y="99"/><use href="#g49" x="837" y="99"/></g><g fill="#505050"><use href="#g50" x="727" y="243"/><use href="#g51" x="739" y="243"/></g><g fill="#444444"><use href="#g51" x="764" y="243"/><use href="#g52" x="776" y="243"/></g><g fill="#444444"><use href="#g40" x="802" y="243"/><use href="#g29" x="814" y="243"/></g><g fill="#505050"><use href="#g53" x="727" y="377"/><use href="#g54" x="739" y="377"/></g><g fill="#444444"><use href="#g55" x="764" y="377"/><use href="#g56" x="776" y="377"/></g><g fill="#505050"><use href="#g14" x="727" y="736"/><use href="#g16" x="739" y="736"/></g><g fill="#444444"><use href="#g57" x="764" y="736"/><use href="#g58" x="776" y="736"/></g><g fill="#444444"><use href="#g59" x="802" y="736"/><use href="#g60" x="814" y="736"/></g><g fill="#111"><use href="#g61" x="726" y="399"/><use href="#g62" x="738" y="399"/><use href="#g53" x="750" y="399"/><use href="#g54" x="762" y="399"/></g><g fill="#111"><use href="#g63" x="796" y="448"/><use href="#g64" x="808" y="448"/><use href="#g65" x="820" y="448"/><use href="#g10" x="832" y="448"/><use href="#g66" x="844" y="448"/></g></svg>
<div class="t" style="left:39px;top:35px;font-size:12px;line-height:13px;color:#000;-webkit-text-stroke:0.25px #000">(F)</div>
<div class="a" style="left:43px;top:46px;width:7px;height:1px;background:#000"></div>
<div class="t" style="left:99px;top:35px;font-size:12px;line-height:13px;color:#000;-webkit-text-stroke:0.25px #000">(E)</div>
<div class="a" style="left:103px;top:46px;width:8px;height:1px;background:#000"></div>
<div class="t" style="left:159px;top:35px;font-size:12px;line-height:13px;color:#000;-webkit-text-stroke:0.25px #000">(I)</div>
<div class="a" style="left:163px;top:46px;width:3px;height:1px;background:#000"></div>
<div class="t" style="left:218px;top:35px;font-size:12px;line-height:13px;color:#000;-webkit-text-stroke:0.25px #000">(L)</div>
<div class="a" style="left:222px;top:46px;width:7px;height:1px;background:#000"></div>
<div class="t" style="left:276px;top:35px;font-size:12px;line-height:13px;color:#000;-webkit-text-stroke:0.25px #000">(S)</div>
<div class="a" style="left:280px;top:46px;width:8px;height:1px;background:#000"></div>
<div class="t" style="left:336px;top:35px;font-size:12px;line-height:13px;color:#000;-webkit-text-stroke:0.25px #000">(T)</div>
<div class="a" style="left:340px;top:46px;width:7px;height:1px;background:#000"></div>
<div class="t" style="left:397px;top:35px;font-size:12px;line-height:13px;color:#000;-webkit-text-stroke:0.25px #000">(A)</div>
<div class="a" style="left:401px;top:46px;width:8px;height:1px;background:#000"></div>
<div class="t" style="left:506px;top:35px;font-size:12px;line-height:13px;color:#000;-webkit-text-stroke:0.25px #000">(V)</div>
<div class="a" style="left:510px;top:46px;width:8px;height:1px;background:#000"></div>
<div class="t" style="left:567px;top:35px;font-size:12px;line-height:13px;color:#000;-webkit-text-stroke:0.25px #000">(W)</div>
<div class="a" style="left:571px;top:46px;width:11px;height:1px;background:#000"></div>
<div class="t" style="left:631px;top:35px;font-size:12px;line-height:13px;color:#000;-webkit-text-stroke:0.25px #000">(H)</div>
<div class="a" style="left:635px;top:46px;width:9px;height:1px;background:#000"></div>
<div class="t" style="left:432px;top:35px;font-size:12px;line-height:13px;color:#000;-webkit-text-stroke:0.25px #000">3D(D)</div>
<div class="a" style="left:451px;top:46px;width:9px;height:1px;background:#000"></div>
<div class="t" style="left:197px;top:64px;font-size:12px;line-height:13px;color:#000;-webkit-text-stroke:0.25px #000">:</div>
<div class="t" style="left:378px;top:63px;font-size:12px;line-height:13px;color:#000;-webkit-text-stroke:0.25px #000">:</div>
<div class="t" style="left:504px;top:64px;font-size:12px;line-height:13px;color:#000;-webkit-text-stroke:0.25px #000">:</div>
<div class="t" style="left:671px;top:65px;font-size:12px;line-height:13px;color:#a8a898;-webkit-text-stroke:0.25px #a8a898">:</div>
</body></html>
